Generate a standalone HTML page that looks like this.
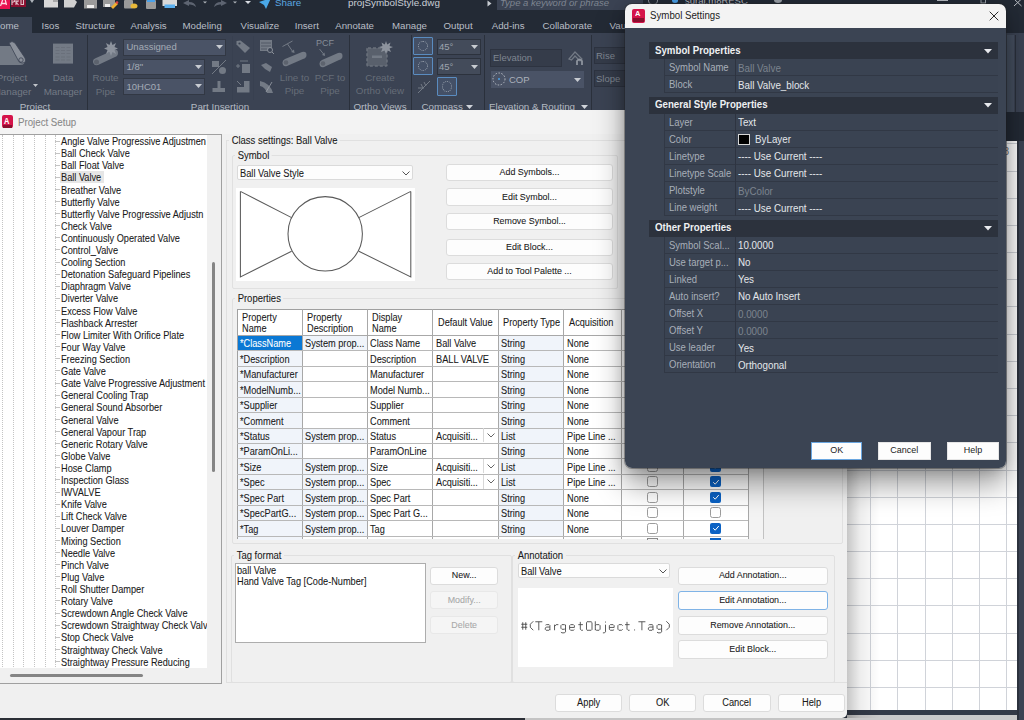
<!DOCTYPE html>
<html><head><meta charset="utf-8"><style>
html,body{margin:0;padding:0;width:1024px;height:720px;overflow:hidden;font-family:"Liberation Sans", sans-serif;}
div{box-sizing:content-box}
</style></head><body><div style="position:relative;width:1024px;height:720px;overflow:hidden">
<div style="position:absolute;left:0px;top:0px;width:1024px;height:720px;background:#232a35"></div><div style="position:absolute;left:0px;top:17px;width:32px;height:16px;background:#3b4353"></div><div style="position:absolute;left:0px;top:33px;width:1024px;height:79px;background:#3b4353"></div><div style="position:absolute;left:0px;top:20.18px;height:11.64px;line-height:11.64px;font-size:9.70px;color:#b9bec6;font-weight:400;white-space:nowrap;">ome</div><div style="position:absolute;left:41.5px;top:20.18px;height:11.64px;line-height:11.64px;font-size:9.70px;color:#b9bec6;font-weight:400;white-space:nowrap;">Isos</div><div style="position:absolute;left:75.6px;top:20.18px;height:11.64px;line-height:11.64px;font-size:9.70px;color:#b9bec6;font-weight:400;white-space:nowrap;">Structure</div><div style="position:absolute;left:130.6px;top:20.18px;height:11.64px;line-height:11.64px;font-size:9.70px;color:#b9bec6;font-weight:400;white-space:nowrap;">Analysis</div><div style="position:absolute;left:182.5px;top:20.18px;height:11.64px;line-height:11.64px;font-size:9.70px;color:#b9bec6;font-weight:400;white-space:nowrap;">Modeling</div><div style="position:absolute;left:240.6px;top:20.18px;height:11.64px;line-height:11.64px;font-size:9.70px;color:#b9bec6;font-weight:400;white-space:nowrap;">Visualize</div><div style="position:absolute;left:294.7px;top:20.18px;height:11.64px;line-height:11.64px;font-size:9.70px;color:#b9bec6;font-weight:400;white-space:nowrap;">Insert</div><div style="position:absolute;left:335.2px;top:20.18px;height:11.64px;line-height:11.64px;font-size:9.70px;color:#b9bec6;font-weight:400;white-space:nowrap;">Annotate</div><div style="position:absolute;left:392px;top:20.18px;height:11.64px;line-height:11.64px;font-size:9.70px;color:#b9bec6;font-weight:400;white-space:nowrap;">Manage</div><div style="position:absolute;left:443.5px;top:20.18px;height:11.64px;line-height:11.64px;font-size:9.70px;color:#b9bec6;font-weight:400;white-space:nowrap;">Output</div><div style="position:absolute;left:491.7px;top:20.18px;height:11.64px;line-height:11.64px;font-size:9.70px;color:#b9bec6;font-weight:400;white-space:nowrap;">Add-ins</div><div style="position:absolute;left:542.5px;top:20.18px;height:11.64px;line-height:11.64px;font-size:9.70px;color:#b9bec6;font-weight:400;white-space:nowrap;">Collaborate</div><div style="position:absolute;left:609.6px;top:20.18px;height:11.64px;line-height:11.64px;font-size:9.70px;color:#b9bec6;font-weight:400;white-space:nowrap;">Vau</div><div style="position:absolute;left:348px;top:-2.91px;height:11.82px;line-height:11.82px;font-size:9.85px;color:#c9ced6;font-weight:400;white-space:nowrap;">projSymbolStyle.dwg</div><div style="position:absolute;left:497px;top:0px;width:146px;height:9.5px;background:#3b4353"></div><div style="position:absolute;left:648px;top:-4px;width:8px;height:7px;border:1px solid #8a9099;border-radius:50%"></div><div style="position:absolute;left:672px;top:-2px;width:6px;height:5px;background:#4aa0e8;border-radius:50%"></div><div style="position:absolute;left:685px;top:-5.20px;height:11.40px;line-height:11.40px;font-size:9.50px;color:#b8bcc2;font-weight:400;white-space:nowrap;">suraj.m8RESC</div><div style="position:absolute;left:774px;top:-3px;width:8px;height:6px;background:#9aa0a8;border-radius:0 0 50% 50%"></div><div style="position:absolute;left:500px;top:-2.70px;height:11.40px;line-height:11.40px;font-size:9.50px;color:#7e8591;font-weight:400;white-space:nowrap;font-style:italic">Type a keyword or phrase</div><div style="position:absolute;left:275px;top:-2.88px;height:11.76px;line-height:11.76px;font-size:9.80px;color:#5aa7e0;font-weight:400;white-space:nowrap;">Share</div><svg style="position:absolute;left:487px;top:0px" width="6" height="8"><path d="M0.5 0.5 L4.5 3.5 L0.5 6.5 Z" fill="#c8ccd2"/></svg><div style="position:absolute;left:0px;top:0px;width:9.5px;height:8.5px;background:#e8104f"></div><div style="position:absolute;left:10.5px;top:0px;width:15.5px;height:6.5px;background:#8a0e2e"></div><svg style="position:absolute;left:0;top:0" width="30" height="10"><path d="M0.5 6 L3 -1 L5 -1 L6.5 5 M1.5 3.5 L5.5 3.5" stroke="#ffd8e2" stroke-width="1.3" fill="none"/><path d="M12 5 L12 -1 L14 -1 L14.5 1.5 L12 2.5 M16 5 L16 -1 L18 -1 L18 1.5 L16 2 L18.5 5 M21 -0.5 L23.5 -0.5 L23.5 4.5 L21 4.5 Z" stroke="#e0c0c8" stroke-width="1.1" fill="none"/></svg><div style="position:absolute;left:86.5px;top:35px;width:1.2999999999999972px;height:75px;background:#2a303b"></div><div style="position:absolute;left:348.7px;top:35px;width:1.3000000000000114px;height:75px;background:#2a303b"></div><div style="position:absolute;left:411px;top:35px;width:1.3000000000000114px;height:75px;background:#2a303b"></div><div style="position:absolute;left:483.7px;top:35px;width:1.3000000000000114px;height:75px;background:#2a303b"></div><div style="position:absolute;left:590.5px;top:35px;width:1.2999999999999545px;height:75px;background:#2a303b"></div><div style="position:absolute;left:-13px;width:50px;text-align:center;top:71.62px;height:11.76px;line-height:11.76px;font-size:9.80px;color:#737a85;font-weight:400;white-space:nowrap;">Project</div><div style="position:absolute;left:-13px;width:50px;text-align:center;top:85.62px;height:11.76px;line-height:11.76px;font-size:9.80px;color:#737a85;font-weight:400;white-space:nowrap;">Manager</div><svg style="position:absolute;left:33px;top:84px" width="6" height="4"><path d="M0 0 L5 0 L2.5 3 Z" fill="#c0c4ca"/></svg><div style="position:absolute;left:43px;width:40px;text-align:center;top:71.62px;height:11.76px;line-height:11.76px;font-size:9.80px;color:#737a85;font-weight:400;white-space:nowrap;">Data</div><div style="position:absolute;left:43px;width:40px;text-align:center;top:85.62px;height:11.76px;line-height:11.76px;font-size:9.80px;color:#737a85;font-weight:400;white-space:nowrap;">Manager</div><div style="position:absolute;left:15px;width:40px;text-align:center;top:100.62px;height:11.76px;line-height:11.76px;font-size:9.80px;color:#b4bac2;font-weight:400;white-space:nowrap;">Project</div><div style="position:absolute;left:88px;width:35px;text-align:center;top:71.62px;height:11.76px;line-height:11.76px;font-size:9.80px;color:#6a717c;font-weight:400;white-space:nowrap;">Route</div><div style="position:absolute;left:88px;width:35px;text-align:center;top:85.62px;height:11.76px;line-height:11.76px;font-size:9.80px;color:#6a717c;font-weight:400;white-space:nowrap;">Pipe</div><div style="position:absolute;left:180px;width:80px;text-align:center;top:100.62px;height:11.76px;line-height:11.76px;font-size:9.80px;color:#b4bac2;font-weight:400;white-space:nowrap;">Part Insertion</div><div style="position:absolute;left:274px;width:41px;text-align:center;top:71.82px;height:11.76px;line-height:11.76px;font-size:9.80px;color:#666d78;font-weight:400;white-space:nowrap;">Line to</div><div style="position:absolute;left:274px;width:41px;text-align:center;top:85.12px;height:11.76px;line-height:11.76px;font-size:9.80px;color:#666d78;font-weight:400;white-space:nowrap;">Pipe</div><div style="position:absolute;left:310px;width:40px;text-align:center;top:71.82px;height:11.76px;line-height:11.76px;font-size:9.80px;color:#666d78;font-weight:400;white-space:nowrap;">PCF to</div><div style="position:absolute;left:310px;width:40px;text-align:center;top:85.12px;height:11.76px;line-height:11.76px;font-size:9.80px;color:#666d78;font-weight:400;white-space:nowrap;">Pipe</div><div style="position:absolute;left:350px;width:60px;text-align:center;top:71.72px;height:11.76px;line-height:11.76px;font-size:9.80px;color:#666d78;font-weight:400;white-space:nowrap;">Create</div><div style="position:absolute;left:350px;width:60px;text-align:center;top:85.42px;height:11.76px;line-height:11.76px;font-size:9.80px;color:#666d78;font-weight:400;white-space:nowrap;">Ortho View</div><div style="position:absolute;left:345px;width:70px;text-align:center;top:101.12px;height:11.76px;line-height:11.76px;font-size:9.80px;color:#b4bac2;font-weight:400;white-space:nowrap;">Ortho Views</div><div style="position:absolute;left:421.5px;top:101.12px;height:11.76px;line-height:11.76px;font-size:9.80px;color:#b4bac2;font-weight:400;white-space:nowrap;">Compass</div><svg style="position:absolute;left:465.5px;top:104.5px" width="8" height="5"><path d="M0 0 L7 0 L3.5 4 Z" fill="#d0d4da"/></svg><div style="position:absolute;left:489px;top:101.12px;height:11.76px;line-height:11.76px;font-size:9.80px;color:#b4bac2;font-weight:400;white-space:nowrap;">Elevation &amp; Routing</div><svg style="position:absolute;left:580.5px;top:104.5px" width="8" height="5"><path d="M0 0 L7 0 L3.5 4 Z" fill="#d0d4da"/></svg><div style="position:absolute;left:122.5px;top:38.5px;width:103.5px;height:17.0px;background:#4a5366;border:1px solid #323844;box-sizing:border-box"></div><div style="position:absolute;left:126.5px;top:41.30px;height:11.40px;line-height:11.40px;font-size:9.50px;color:#a5acb6;font-weight:400;white-space:nowrap;">Unassigned</div><svg style="position:absolute;left:216px;top:45.0px" width="8" height="5"><path d="M0 0 L7 0 L3.5 4 Z" fill="#c8ccd2"/></svg><div style="position:absolute;left:122.5px;top:58.5px;width:82.5px;height:16.5px;background:#4a5366;border:1px solid #323844;box-sizing:border-box"></div><div style="position:absolute;left:126.5px;top:61.05px;height:11.40px;line-height:11.40px;font-size:9.50px;color:#a5acb6;font-weight:400;white-space:nowrap;">1/8"</div><svg style="position:absolute;left:195px;top:64.75px" width="8" height="5"><path d="M0 0 L7 0 L3.5 4 Z" fill="#c8ccd2"/></svg><div style="position:absolute;left:122.5px;top:78px;width:82.5px;height:16.5px;background:#4a5366;border:1px solid #323844;box-sizing:border-box"></div><div style="position:absolute;left:126.5px;top:80.55px;height:11.40px;line-height:11.40px;font-size:9.50px;color:#a5acb6;font-weight:400;white-space:nowrap;">10HC01</div><svg style="position:absolute;left:195px;top:84.25px" width="8" height="5"><path d="M0 0 L7 0 L3.5 4 Z" fill="#c8ccd2"/></svg><div style="position:absolute;left:437px;top:39px;width:44px;height:16px;background:#434b5a;border:1px solid #2c323d;box-sizing:border-box"></div><div style="position:absolute;left:439px;top:41.30px;height:11.40px;line-height:11.40px;font-size:9.50px;color:#9ea5af;font-weight:400;white-space:nowrap;">45&#176;</div><svg style="position:absolute;left:471px;top:45.0px" width="8" height="5"><path d="M0 0 L7 0 L3.5 4 Z" fill="#c8ccd2"/></svg><div style="position:absolute;left:437px;top:58px;width:44px;height:17px;background:#434b5a;border:1px solid #2c323d;box-sizing:border-box"></div><div style="position:absolute;left:439px;top:60.80px;height:11.40px;line-height:11.40px;font-size:9.50px;color:#9ea5af;font-weight:400;white-space:nowrap;">45&#176;</div><svg style="position:absolute;left:471px;top:64.5px" width="8" height="5"><path d="M0 0 L7 0 L3.5 4 Z" fill="#c8ccd2"/></svg><div style="position:absolute;left:413px;top:37px;width:20px;height:18px;background:#445066;border:1px solid #5a8cc0;border-radius:1px;box-sizing:border-box"></div><div style="position:absolute;left:418px;top:41px;width:10px;height:10px;border:1px dotted #9aa3ae;border-radius:50%;box-sizing:border-box"></div><div style="position:absolute;left:413px;top:57px;width:20px;height:18px;background:#445066;border:1px solid #5a8cc0;border-radius:1px;box-sizing:border-box"></div><div style="position:absolute;left:418px;top:61px;width:10px;height:10px;border:1px dotted #9aa3ae;border-radius:50%;box-sizing:border-box"></div><div style="position:absolute;left:437px;top:77px;width:20px;height:19px;background:#445066;border:1px solid #5a8cc0;border-radius:1px;box-sizing:border-box"></div><div style="position:absolute;left:442px;top:81px;width:10px;height:11px;border:1px dotted #9aa3ae;border-radius:50%;box-sizing:border-box"></div><div style="position:absolute;left:490px;top:49px;width:72px;height:17.5px;background:#353c4a;border:1px solid #2d3340;box-sizing:border-box"></div><div style="position:absolute;left:493px;top:51.80px;height:11.40px;line-height:11.40px;font-size:9.50px;color:#7f8691;font-weight:400;white-space:nowrap;">Elevation</div><div style="position:absolute;left:491px;top:71px;width:93px;height:17px;background:#4a5366"></div><div style="position:absolute;left:509px;top:73.80px;height:11.40px;line-height:11.40px;font-size:9.50px;color:#aab1bb;font-weight:400;white-space:nowrap;">COP</div><svg style="position:absolute;left:574px;top:77.5px" width="8" height="5"><path d="M0 0 L7 0 L3.5 4 Z" fill="#c8ccd2"/></svg><div style="position:absolute;left:594px;top:47px;width:46px;height:17px;background:#353c4a;border:1px solid #2d3340;box-sizing:border-box"></div><div style="position:absolute;left:596px;top:49.80px;height:11.40px;line-height:11.40px;font-size:9.50px;color:#7f8691;font-weight:400;white-space:nowrap;">Rise</div><div style="position:absolute;left:594px;top:70px;width:46px;height:17px;background:#353c4a;border:1px solid #2d3340;box-sizing:border-box"></div><div style="position:absolute;left:596px;top:72.80px;height:11.40px;line-height:11.40px;font-size:9.50px;color:#7f8691;font-weight:400;white-space:nowrap;">Slope</div><svg style="position:absolute;left:0;top:0" width="1024" height="112"><path d="M30 0 L34 0 L32 3 Z" fill="#aeb3ba"/><path d="M44 0 L58 0 L58 7.5 L44 7.5 Z" fill="#d8d8d8"/><path d="M53 0 L58 0 L58 2 L53 2Z" fill="#a8a8a8"/><path d="M64 0 L75 0 L77 2 L74 7.5 L64 7.5 Z" fill="#d0d0d0"/><path d="M84 0 L97 0 L97 8.5 L84 8.5 Z" fill="#9a9a9a"/><rect x="87" y="5" width="7" height="3" fill="#eee"/><path d="M103 0 L115 0 L115 7 L103 7 Z" fill="#9a9a9a"/><rect x="105" y="4" width="5" height="3" fill="#eee"/><path d="M111 7 L116 2 L118 4 L113 9 Z" fill="#f0b030"/><circle cx="117" cy="2.5" r="1.3" fill="#e04040"/><rect x="124" y="0" width="9" height="8.5" rx="1" fill="#9a9a9a"/><ellipse cx="134" cy="6" rx="3.5" ry="2.5" fill="#e8b83a"/><rect x="146" y="0" width="10" height="9" rx="1" fill="#9a9a9a"/><rect x="147" y="0" width="8" height="2" fill="#4aa0e8"/><rect x="162.5" y="0" width="14.5" height="6" fill="#d9d9d9"/><rect x="164.5" y="4.5" width="10.5" height="3.5" fill="#5bb0ef"/><path d="M183 3 L189 0 L189 2 Q195 2 196 7 Q193 4 189 4.5 L189 6 Z" fill="#5d6471"/><path d="M203 1.5 L207 1.5 L205 3.5 Z" fill="#aeb3ba"/><path d="M227 3 L221 0 L221 2 Q215 2 214 7 Q217 4 221 4.5 L221 6 Z" fill="#5d6471"/><path d="M233 1.5 L237 1.5 L235 3.5 Z" fill="#aeb3ba"/><path d="M245 1 L251 1 L248 4 Z" fill="#d8dce2"/><path d="M259 2 L271 -2 L266 9 L264 5 Z" fill="#4aa8e8"/><path d="M1014 -1 L1021.5 6 M1021.5 -1 L1014 6" stroke="#b8bcc2" stroke-width="1"/><rect x="981" y="-3" width="4.5" height="6" fill="none" stroke="#9aa0a8" stroke-width="1"/><path d="M937 0.5 L948 0.5" stroke="#b8bcc2" stroke-width="1"/><path d="M0 46 L14 46 L24 60 Q26 65 20 65 L0 65 Z" fill="#737a85"/><path d="M9 43 Q12 40 15 43 L25 58 Q27 63 22 63 Q19 63 18 60 Z" fill="#8a909a" stroke="#3b4353" stroke-width="0.8"/><circle cx="21" cy="60" r="2.2" fill="none" stroke="#3b4353" stroke-width="0.8"/><rect x="53" y="43.6" width="20" height="20" fill="#737a85"/><rect x="55.5" y="47" width="4" height="1" fill="#6a707b"/><rect x="61" y="47" width="4" height="1" fill="#6a707b"/><rect x="66.5" y="47" width="4" height="1" fill="#6a707b"/><rect x="55.5" y="50" width="4" height="1" fill="#6a707b"/><rect x="61" y="50" width="4" height="1" fill="#6a707b"/><rect x="66.5" y="50" width="4" height="1" fill="#6a707b"/><rect x="55.5" y="53" width="4" height="1" fill="#6a707b"/><rect x="61" y="53" width="4" height="1" fill="#6a707b"/><rect x="66.5" y="53" width="4" height="1" fill="#6a707b"/><rect x="55.5" y="56.5" width="4" height="1" fill="#6a707b"/><rect x="61" y="56.5" width="4" height="1" fill="#6a707b"/><rect x="66.5" y="56.5" width="4" height="1" fill="#6a707b"/><rect x="55.5" y="59.5" width="4" height="1" fill="#6a707b"/><rect x="61" y="59.5" width="4" height="1" fill="#6a707b"/><rect x="66.5" y="59.5" width="4" height="1" fill="#6a707b"/><path d="M96 58 L114 50 Q118 49 118 53 Q118 56 115 57 L98 65 Q93 66 93 61 Q93 59 96 58 Z" fill="#737a85"/><circle cx="96.5" cy="62" r="2.5" fill="#5d636e"/><path d="M111 41 L112.5 45 L116 43 L114.5 47 L118 48.5 L114.5 50 L116 54 L112.5 52 L111 56 L109.5 52 L106 54 L107.5 50 L104 48.5 L107.5 47 L106 43 L109.5 45 Z" fill="#8d939d"/><rect x="212" y="61" width="7" height="6" fill="#737a85"/><circle cx="222.5" cy="70.5" r="3.5" fill="#737a85"/><path d="M212 74 L226 60" stroke="#737a85" stroke-width="1"/><rect x="212.5" y="88" width="12.5" height="4" fill="#737a85"/><rect x="217.5" y="81" width="3" height="7" fill="#737a85"/><path d="M236.5 44.5 L236.5 41 L240.5 40.5 L250 48 L245 53 Z" fill="#737a85"/><circle cx="239.5" cy="43.5" r="1.1" fill="#3b4353"/><rect x="242" y="64" width="8" height="9" fill="#737a85"/><path d="M236 66 L240 66 M238 64 L238 68 M240 61 L248 61" stroke="#737a85" stroke-width="1"/><path d="M244 81 L249.5 81 L249.5 92.5 L237 92.5 L237 87 L244 87 Z" fill="#737a85"/><path d="M237 81 L241 85" stroke="#737a85" stroke-width="1"/><rect x="260" y="40" width="12" height="11" fill="#737a85"/><path d="M261 43 L271 43 M261 46 L271 46 M261 49 L267 49" stroke="#4a515d" stroke-width="0.8"/><circle cx="270" cy="50" r="2.5" fill="#3b4353" stroke="#8a9099" stroke-width="1"/><path d="M272 52 L274 54" stroke="#8a9099" stroke-width="1"/><path d="M261 65 L266 63 L272 67 L270 72 L265 69 Z" fill="#737a85"/><path d="M260 81 Q270 83 273 93 L267 93 Q265 87 260 86 Z" fill="#737a85"/><path d="M266 92 L272 82" stroke="#9aa0a8" stroke-width="0.8"/><path d="M282.5 46.5 L292.5 41" stroke="#737a85" stroke-width="1"/><path d="M287.5 44 L293 52" stroke="#737a85" stroke-width="1"/><path d="M291 52 L294.5 53 L294 49.5 Z" fill="#737a85"/><path d="M285 59 L302 52 Q306.5 51 306.5 55 Q306.5 58 303 59 L287 66 Q282.5 67 282.5 62.5 Q282.5 60 285 59 Z" fill="#737a85"/><circle cx="286" cy="62.5" r="2.3" fill="#5d636e"/><path d="M319.5 49 L324 54.5" stroke="#737a85" stroke-width="1"/><path d="M322 55 L325 56 L324.5 52.5 Z" fill="#737a85"/><path d="M322 60 L338 53 Q342.5 52 342.5 56 Q342.5 59 339 60 L324 67 Q319.5 68 319.5 63.5 Q319.5 61 322 60 Z" fill="#737a85"/><circle cx="323" cy="63.5" r="2.3" fill="#5d636e"/><rect x="367" y="48" width="20" height="18" rx="1" fill="#59606c" stroke="#6b717c" stroke-width="1.5" stroke-dasharray="3 2"/><rect x="372" y="55.5" width="10" height="2.5" fill="#737a85"/><path d="M386 41 L387.2 44.5 L390.5 42.5 L389.5 46 L393 47 L389.5 48.5 L391 52 L387.5 50.5 L386 54 L384.5 50.5 L381 52 L382.5 48.5 L379 47 L382.5 46 L381.5 42.5 L384.8 44.5 Z" fill="#8d939d"/><path d="M418 93 L430 81 M421 84 L423 88 M424 82 L426 86 M418 88 L424 88" stroke="#737a85" stroke-width="1"/><path d="M569 59 L575 52 L582 59 L580 61 L575 56 L571.5 60 Z" fill="none" stroke="#737a85" stroke-width="1.2"/><path d="M577 65 L577 61 Q579.5 58 582 61 L582 65" fill="none" stroke="#8d939d" stroke-width="1.8"/><circle cx="499" cy="79" r="6" fill="none" stroke="#b8bdc5" stroke-width="1" stroke-dasharray="1.5 1.5"/><circle cx="499" cy="79" r="1" fill="#4aa0e8"/></svg><div style="position:absolute;left:232px;top:36px;width:1px;height:64px;background:#384050"></div><div style="position:absolute;left:253px;top:36px;width:1px;height:64px;background:#384050"></div><div style="position:absolute;left:316px;top:38.10px;height:10.80px;line-height:10.80px;font-size:9.00px;color:#868d97;font-weight:400;white-space:nowrap;">PCF</div><div style="position:absolute;left:1007px;top:35px;width:7px;height:77px;background:#465061"></div><div style="position:absolute;left:1015px;top:35px;width:1px;height:77px;background:#2a303b"></div><div style="position:absolute;left:1006px;top:112px;width:18px;height:28.5px;background:#232a35"></div><div style="position:absolute;left:847px;top:140.5px;width:170px;height:569.5px;background:#ffffff;overflow:hidden"><div style="position:absolute;left:23.1px;top:0;width:1px;height:100%;background:#d0d3d9"></div><div style="position:absolute;left:50.4px;top:0;width:1px;height:100%;background:#d0d3d9"></div><div style="position:absolute;left:77.9px;top:0;width:1px;height:100%;background:#d0d3d9"></div><div style="position:absolute;left:105.2px;top:0;width:1px;height:100%;background:#d0d3d9"></div><div style="position:absolute;left:132.0px;top:0;width:1px;height:100%;background:#d0d3d9"></div><div style="position:absolute;left:158.7px;top:0;width:1px;height:100%;background:#d0d3d9"></div><div style="position:absolute;top:356.2px;left:0;height:1px;width:100%;background:#d0d3d9"></div><div style="position:absolute;top:329.0px;left:0;height:1px;width:100%;background:#d0d3d9"></div><div style="position:absolute;top:301.8px;left:0;height:1px;width:100%;background:#d0d3d9"></div><div style="position:absolute;top:274.7px;left:0;height:1px;width:100%;background:#d0d3d9"></div><div style="position:absolute;top:247.5px;left:0;height:1px;width:100%;background:#d0d3d9"></div><div style="position:absolute;top:220.3px;left:0;height:1px;width:100%;background:#d0d3d9"></div><div style="position:absolute;top:193.1px;left:0;height:1px;width:100%;background:#d0d3d9"></div><div style="position:absolute;top:165.9px;left:0;height:1px;width:100%;background:#d0d3d9"></div><div style="position:absolute;top:138.8px;left:0;height:1px;width:100%;background:#d0d3d9"></div><div style="position:absolute;top:111.6px;left:0;height:1px;width:100%;background:#d0d3d9"></div><div style="position:absolute;top:84.4px;left:0;height:1px;width:100%;background:#d0d3d9"></div><div style="position:absolute;top:57.2px;left:0;height:1px;width:100%;background:#d0d3d9"></div><div style="position:absolute;top:30.0px;left:0;height:1px;width:100%;background:#d0d3d9"></div><div style="position:absolute;top:2.9px;left:0;height:1px;width:100%;background:#d0d3d9"></div><div style="position:absolute;top:383.4px;left:0;height:1px;width:100%;background:#d0d3d9"></div><div style="position:absolute;top:410.6px;left:0;height:1px;width:100%;background:#d0d3d9"></div><div style="position:absolute;top:437.7px;left:0;height:1px;width:100%;background:#d0d3d9"></div><div style="position:absolute;top:464.9px;left:0;height:1px;width:100%;background:#d0d3d9"></div><div style="position:absolute;top:492.1px;left:0;height:1px;width:100%;background:#d0d3d9"></div><div style="position:absolute;top:519.3px;left:0;height:1px;width:100%;background:#d0d3d9"></div><div style="position:absolute;top:546.5px;left:0;height:1px;width:100%;background:#d0d3d9"></div></div><div style="position:absolute;left:1017px;top:140.5px;width:7px;height:579.5px;background:#3b4353"></div><div style="position:absolute;left:1016.8px;top:140.5px;width:2.2000000000000455px;height:579.5px;background:#2c323d"></div><div style="position:absolute;left:1003.5px;top:145.50px;height:12.00px;line-height:12.00px;font-size:10.00px;color:#6a6a6a;font-weight:400;white-space:nowrap;">8</div><div style="position:absolute;left:847px;top:710px;width:170px;height:4.5px;background:#333a47"></div><div style="position:absolute;left:847px;top:714.5px;width:170px;height:5.5px;background:#c8c8c8"></div><div style="position:absolute;left:847px;top:137px;width:33px;height:581px;background:linear-gradient(to right,rgba(0,0,0,0.22),rgba(0,0,0,0.07) 40%,rgba(0,0,0,0))"></div><div style="position:absolute;left:0px;top:110px;width:847px;height:608.4px;background:#f0f0f0;border-radius:0 0 5px 0"></div><div style="position:absolute;left:0px;top:110px;width:847px;height:24px;background:#f3f3f3"></div><div style="position:absolute;left:2px;top:115px;width:11px;height:13px;background:#d5144a;border-radius:2px"></div><div style="position:absolute;left:3px;top:124.5px;width:9px;height:3.0px;background:#8a0f2e"></div><div style="position:absolute;left:4.2px;top:115.76px;height:10.08px;line-height:10.08px;font-size:8.40px;color:#fff;font-weight:700;white-space:nowrap;transform:scaleX(0.8929);transform-origin:0 50%;-webkit-text-stroke:0.08px currentColor;">A</div><div style="position:absolute;left:18px;top:115.58px;height:13.04px;line-height:13.04px;font-size:10.86px;color:#888888;font-weight:400;white-space:nowrap;transform:scaleX(0.8929);transform-origin:0 50%;-webkit-text-stroke:0.08px currentColor;">Project Setup</div><div style="position:absolute;left:0px;top:718.4px;width:525px;height:1.6000000000000227px;background:#2b2f36"></div><div style="position:absolute;left:525px;top:718.4px;width:322px;height:1.6000000000000227px;background:#c4c4c4"></div><div style="position:absolute;left:0px;top:134px;width:221.5px;height:549.5px;border:1px solid #a0a0a0;border-left:none;box-sizing:border-box;background:#f0f0f0"></div><div style="position:absolute;left:0px;top:135px;width:207px;height:533px;background:#fff;overflow:hidden;position:absolute"><div style="position:absolute;left:2px;top:0px;width:1px;height:534px;border-left:1px dotted #c4c4c4;box-sizing:border-box"></div><div style="position:absolute;left:12.5px;top:0px;width:1.0px;height:534px;border-left:1px dotted #c4c4c4;box-sizing:border-box"></div><div style="position:absolute;left:23px;top:0px;width:1px;height:534px;border-left:1px dotted #c4c4c4;box-sizing:border-box"></div><div style="position:absolute;left:34px;top:0px;width:1px;height:534px;border-left:1px dotted #c4c4c4;box-sizing:border-box"></div><div style="position:absolute;left:44.5px;top:0px;width:1.0px;height:534px;border-left:1px dotted #c4c4c4;box-sizing:border-box"></div><div style="position:absolute;left:54.5px;top:0px;width:1.0px;height:534px;border-left:1px dotted #c4c4c4;box-sizing:border-box"></div><div style="position:absolute;left:55px;top:5.5px;width:5px;height:1.0px;background:#c4c4c4"></div><div style="position:absolute;left:61px;top:1.12px;height:12.36px;line-height:12.36px;font-size:10.30px;color:#1a1a1a;font-weight:400;white-space:nowrap;transform:scaleX(0.8929);transform-origin:0 50%;-webkit-text-stroke:0.08px currentColor;">Angle Valve Progressive Adjustmen</div><div style="position:absolute;left:55px;top:17.60499999999999px;width:5px;height:1.0px;background:#c4c4c4"></div><div style="position:absolute;left:61px;top:13.22px;height:12.36px;line-height:12.36px;font-size:10.30px;color:#1a1a1a;font-weight:400;white-space:nowrap;transform:scaleX(0.8929);transform-origin:0 50%;-webkit-text-stroke:0.08px currentColor;">Ball Check Valve</div><div style="position:absolute;left:55px;top:29.710000000000008px;width:5px;height:1.0px;background:#c4c4c4"></div><div style="position:absolute;left:61px;top:25.33px;height:12.36px;line-height:12.36px;font-size:10.30px;color:#1a1a1a;font-weight:400;white-space:nowrap;transform:scaleX(0.8929);transform-origin:0 50%;-webkit-text-stroke:0.08px currentColor;">Ball Float Valve</div><div style="position:absolute;left:55px;top:41.815px;width:5px;height:1.0px;background:#c4c4c4"></div><div style="position:absolute;left:60px;top:36.315px;width:44px;height:12.0px;background:#e6e6e6"></div><div style="position:absolute;left:61px;top:37.43px;height:12.36px;line-height:12.36px;font-size:10.30px;color:#1a1a1a;font-weight:400;white-space:nowrap;transform:scaleX(0.8929);transform-origin:0 50%;-webkit-text-stroke:0.08px currentColor;">Ball Valve</div><div style="position:absolute;left:55px;top:53.920000000000016px;width:5px;height:1.0px;background:#c4c4c4"></div><div style="position:absolute;left:61px;top:49.54px;height:12.36px;line-height:12.36px;font-size:10.30px;color:#1a1a1a;font-weight:400;white-space:nowrap;transform:scaleX(0.8929);transform-origin:0 50%;-webkit-text-stroke:0.08px currentColor;">Breather Valve</div><div style="position:absolute;left:55px;top:66.025px;width:5px;height:1.0px;background:#c4c4c4"></div><div style="position:absolute;left:61px;top:61.64px;height:12.36px;line-height:12.36px;font-size:10.30px;color:#1a1a1a;font-weight:400;white-space:nowrap;transform:scaleX(0.8929);transform-origin:0 50%;-webkit-text-stroke:0.08px currentColor;">Butterfly Valve</div><div style="position:absolute;left:55px;top:78.13px;width:5px;height:1.0px;background:#c4c4c4"></div><div style="position:absolute;left:61px;top:73.75px;height:12.36px;line-height:12.36px;font-size:10.30px;color:#1a1a1a;font-weight:400;white-space:nowrap;transform:scaleX(0.8929);transform-origin:0 50%;-webkit-text-stroke:0.08px currentColor;">Butterfly Valve Progressive Adjustn</div><div style="position:absolute;left:55px;top:90.23500000000001px;width:5px;height:1.0px;background:#c4c4c4"></div><div style="position:absolute;left:61px;top:85.85px;height:12.36px;line-height:12.36px;font-size:10.30px;color:#1a1a1a;font-weight:400;white-space:nowrap;transform:scaleX(0.8929);transform-origin:0 50%;-webkit-text-stroke:0.08px currentColor;">Check Valve</div><div style="position:absolute;left:55px;top:102.34px;width:5px;height:1.0px;background:#c4c4c4"></div><div style="position:absolute;left:61px;top:97.96px;height:12.36px;line-height:12.36px;font-size:10.30px;color:#1a1a1a;font-weight:400;white-space:nowrap;transform:scaleX(0.8929);transform-origin:0 50%;-webkit-text-stroke:0.08px currentColor;">Continuously Operated Valve</div><div style="position:absolute;left:55px;top:114.445px;width:5px;height:1.0px;background:#c4c4c4"></div><div style="position:absolute;left:61px;top:110.06px;height:12.36px;line-height:12.36px;font-size:10.30px;color:#1a1a1a;font-weight:400;white-space:nowrap;transform:scaleX(0.8929);transform-origin:0 50%;-webkit-text-stroke:0.08px currentColor;">Control_Valve</div><div style="position:absolute;left:55px;top:126.55000000000001px;width:5px;height:1.0px;background:#c4c4c4"></div><div style="position:absolute;left:61px;top:122.17px;height:12.36px;line-height:12.36px;font-size:10.30px;color:#1a1a1a;font-weight:400;white-space:nowrap;transform:scaleX(0.8929);transform-origin:0 50%;-webkit-text-stroke:0.08px currentColor;">Cooling Section</div><div style="position:absolute;left:55px;top:138.65499999999997px;width:5px;height:1.0px;background:#c4c4c4"></div><div style="position:absolute;left:61px;top:134.27px;height:12.36px;line-height:12.36px;font-size:10.30px;color:#1a1a1a;font-weight:400;white-space:nowrap;transform:scaleX(0.8929);transform-origin:0 50%;-webkit-text-stroke:0.08px currentColor;">Detonation Safeguard Pipelines</div><div style="position:absolute;left:55px;top:150.76px;width:5px;height:1.0px;background:#c4c4c4"></div><div style="position:absolute;left:61px;top:146.38px;height:12.36px;line-height:12.36px;font-size:10.30px;color:#1a1a1a;font-weight:400;white-space:nowrap;transform:scaleX(0.8929);transform-origin:0 50%;-webkit-text-stroke:0.08px currentColor;">Diaphragm Valve</div><div style="position:absolute;left:55px;top:162.865px;width:5px;height:1.0px;background:#c4c4c4"></div><div style="position:absolute;left:61px;top:158.48px;height:12.36px;line-height:12.36px;font-size:10.30px;color:#1a1a1a;font-weight:400;white-space:nowrap;transform:scaleX(0.8929);transform-origin:0 50%;-webkit-text-stroke:0.08px currentColor;">Diverter Valve</div><div style="position:absolute;left:55px;top:174.97000000000003px;width:5px;height:1.0px;background:#c4c4c4"></div><div style="position:absolute;left:61px;top:170.59px;height:12.36px;line-height:12.36px;font-size:10.30px;color:#1a1a1a;font-weight:400;white-space:nowrap;transform:scaleX(0.8929);transform-origin:0 50%;-webkit-text-stroke:0.08px currentColor;">Excess Flow Valve</div><div style="position:absolute;left:55px;top:187.07500000000005px;width:5px;height:1.0px;background:#c4c4c4"></div><div style="position:absolute;left:61px;top:182.69px;height:12.36px;line-height:12.36px;font-size:10.30px;color:#1a1a1a;font-weight:400;white-space:nowrap;transform:scaleX(0.8929);transform-origin:0 50%;-webkit-text-stroke:0.08px currentColor;">Flashback Arrester</div><div style="position:absolute;left:55px;top:199.18px;width:5px;height:1.0px;background:#c4c4c4"></div><div style="position:absolute;left:61px;top:194.80px;height:12.36px;line-height:12.36px;font-size:10.30px;color:#1a1a1a;font-weight:400;white-space:nowrap;transform:scaleX(0.8929);transform-origin:0 50%;-webkit-text-stroke:0.08px currentColor;">Flow Limiter With Orifice Plate</div><div style="position:absolute;left:55px;top:211.28499999999997px;width:5px;height:1.0px;background:#c4c4c4"></div><div style="position:absolute;left:61px;top:206.90px;height:12.36px;line-height:12.36px;font-size:10.30px;color:#1a1a1a;font-weight:400;white-space:nowrap;transform:scaleX(0.8929);transform-origin:0 50%;-webkit-text-stroke:0.08px currentColor;">Four Way Valve</div><div style="position:absolute;left:55px;top:223.39px;width:5px;height:1.0px;background:#c4c4c4"></div><div style="position:absolute;left:61px;top:219.01px;height:12.36px;line-height:12.36px;font-size:10.30px;color:#1a1a1a;font-weight:400;white-space:nowrap;transform:scaleX(0.8929);transform-origin:0 50%;-webkit-text-stroke:0.08px currentColor;">Freezing Section</div><div style="position:absolute;left:55px;top:235.495px;width:5px;height:1.0px;background:#c4c4c4"></div><div style="position:absolute;left:61px;top:231.11px;height:12.36px;line-height:12.36px;font-size:10.30px;color:#1a1a1a;font-weight:400;white-space:nowrap;transform:scaleX(0.8929);transform-origin:0 50%;-webkit-text-stroke:0.08px currentColor;">Gate Valve</div><div style="position:absolute;left:55px;top:247.60000000000002px;width:5px;height:1.0px;background:#c4c4c4"></div><div style="position:absolute;left:61px;top:243.22px;height:12.36px;line-height:12.36px;font-size:10.30px;color:#1a1a1a;font-weight:400;white-space:nowrap;transform:scaleX(0.8929);transform-origin:0 50%;-webkit-text-stroke:0.08px currentColor;">Gate Valve Progressive Adjustment</div><div style="position:absolute;left:55px;top:259.70500000000004px;width:5px;height:1.0px;background:#c4c4c4"></div><div style="position:absolute;left:61px;top:255.32px;height:12.36px;line-height:12.36px;font-size:10.30px;color:#1a1a1a;font-weight:400;white-space:nowrap;transform:scaleX(0.8929);transform-origin:0 50%;-webkit-text-stroke:0.08px currentColor;">General Cooling Trap</div><div style="position:absolute;left:55px;top:271.81px;width:5px;height:1.0px;background:#c4c4c4"></div><div style="position:absolute;left:61px;top:267.43px;height:12.36px;line-height:12.36px;font-size:10.30px;color:#1a1a1a;font-weight:400;white-space:nowrap;transform:scaleX(0.8929);transform-origin:0 50%;-webkit-text-stroke:0.08px currentColor;">General Sound Absorber</div><div style="position:absolute;left:55px;top:283.915px;width:5px;height:1.0px;background:#c4c4c4"></div><div style="position:absolute;left:61px;top:279.53px;height:12.36px;line-height:12.36px;font-size:10.30px;color:#1a1a1a;font-weight:400;white-space:nowrap;transform:scaleX(0.8929);transform-origin:0 50%;-webkit-text-stroke:0.08px currentColor;">General Valve</div><div style="position:absolute;left:55px;top:296.02px;width:5px;height:1.0px;background:#c4c4c4"></div><div style="position:absolute;left:61px;top:291.64px;height:12.36px;line-height:12.36px;font-size:10.30px;color:#1a1a1a;font-weight:400;white-space:nowrap;transform:scaleX(0.8929);transform-origin:0 50%;-webkit-text-stroke:0.08px currentColor;">General Vapour Trap</div><div style="position:absolute;left:55px;top:308.125px;width:5px;height:1.0px;background:#c4c4c4"></div><div style="position:absolute;left:61px;top:303.74px;height:12.36px;line-height:12.36px;font-size:10.30px;color:#1a1a1a;font-weight:400;white-space:nowrap;transform:scaleX(0.8929);transform-origin:0 50%;-webkit-text-stroke:0.08px currentColor;">Generic Rotary Valve</div><div style="position:absolute;left:55px;top:320.23px;width:5px;height:1.0px;background:#c4c4c4"></div><div style="position:absolute;left:61px;top:315.85px;height:12.36px;line-height:12.36px;font-size:10.30px;color:#1a1a1a;font-weight:400;white-space:nowrap;transform:scaleX(0.8929);transform-origin:0 50%;-webkit-text-stroke:0.08px currentColor;">Globe Valve</div><div style="position:absolute;left:55px;top:332.33500000000004px;width:5px;height:1.0px;background:#c4c4c4"></div><div style="position:absolute;left:61px;top:327.95px;height:12.36px;line-height:12.36px;font-size:10.30px;color:#1a1a1a;font-weight:400;white-space:nowrap;transform:scaleX(0.8929);transform-origin:0 50%;-webkit-text-stroke:0.08px currentColor;">Hose Clamp</div><div style="position:absolute;left:55px;top:344.44px;width:5px;height:1.0px;background:#c4c4c4"></div><div style="position:absolute;left:61px;top:340.06px;height:12.36px;line-height:12.36px;font-size:10.30px;color:#1a1a1a;font-weight:400;white-space:nowrap;transform:scaleX(0.8929);transform-origin:0 50%;-webkit-text-stroke:0.08px currentColor;">Inspection Glass</div><div style="position:absolute;left:55px;top:356.545px;width:5px;height:1.0px;background:#c4c4c4"></div><div style="position:absolute;left:61px;top:352.16px;height:12.36px;line-height:12.36px;font-size:10.30px;color:#1a1a1a;font-weight:400;white-space:nowrap;transform:scaleX(0.8929);transform-origin:0 50%;-webkit-text-stroke:0.08px currentColor;">IWVALVE</div><div style="position:absolute;left:55px;top:368.65000000000003px;width:5px;height:1.0px;background:#c4c4c4"></div><div style="position:absolute;left:61px;top:364.27px;height:12.36px;line-height:12.36px;font-size:10.30px;color:#1a1a1a;font-weight:400;white-space:nowrap;transform:scaleX(0.8929);transform-origin:0 50%;-webkit-text-stroke:0.08px currentColor;">Knife Valve</div><div style="position:absolute;left:55px;top:380.755px;width:5px;height:1.0px;background:#c4c4c4"></div><div style="position:absolute;left:61px;top:376.37px;height:12.36px;line-height:12.36px;font-size:10.30px;color:#1a1a1a;font-weight:400;white-space:nowrap;transform:scaleX(0.8929);transform-origin:0 50%;-webkit-text-stroke:0.08px currentColor;">Lift Check Valve</div><div style="position:absolute;left:55px;top:392.86px;width:5px;height:1.0px;background:#c4c4c4"></div><div style="position:absolute;left:61px;top:388.48px;height:12.36px;line-height:12.36px;font-size:10.30px;color:#1a1a1a;font-weight:400;white-space:nowrap;transform:scaleX(0.8929);transform-origin:0 50%;-webkit-text-stroke:0.08px currentColor;">Louver Damper</div><div style="position:absolute;left:55px;top:404.96500000000003px;width:5px;height:1.0px;background:#c4c4c4"></div><div style="position:absolute;left:61px;top:400.58px;height:12.36px;line-height:12.36px;font-size:10.30px;color:#1a1a1a;font-weight:400;white-space:nowrap;transform:scaleX(0.8929);transform-origin:0 50%;-webkit-text-stroke:0.08px currentColor;">Mixing Section</div><div style="position:absolute;left:55px;top:417.06999999999994px;width:5px;height:1.0px;background:#c4c4c4"></div><div style="position:absolute;left:61px;top:412.69px;height:12.36px;line-height:12.36px;font-size:10.30px;color:#1a1a1a;font-weight:400;white-space:nowrap;transform:scaleX(0.8929);transform-origin:0 50%;-webkit-text-stroke:0.08px currentColor;">Needle Valve</div><div style="position:absolute;left:55px;top:429.17499999999995px;width:5px;height:1.0px;background:#c4c4c4"></div><div style="position:absolute;left:61px;top:424.79px;height:12.36px;line-height:12.36px;font-size:10.30px;color:#1a1a1a;font-weight:400;white-space:nowrap;transform:scaleX(0.8929);transform-origin:0 50%;-webkit-text-stroke:0.08px currentColor;">Pinch Valve</div><div style="position:absolute;left:55px;top:441.28px;width:5px;height:1.0px;background:#c4c4c4"></div><div style="position:absolute;left:61px;top:436.90px;height:12.36px;line-height:12.36px;font-size:10.30px;color:#1a1a1a;font-weight:400;white-space:nowrap;transform:scaleX(0.8929);transform-origin:0 50%;-webkit-text-stroke:0.08px currentColor;">Plug Valve</div><div style="position:absolute;left:55px;top:453.385px;width:5px;height:1.0px;background:#c4c4c4"></div><div style="position:absolute;left:61px;top:449.00px;height:12.36px;line-height:12.36px;font-size:10.30px;color:#1a1a1a;font-weight:400;white-space:nowrap;transform:scaleX(0.8929);transform-origin:0 50%;-webkit-text-stroke:0.08px currentColor;">Roll Shutter Damper</div><div style="position:absolute;left:55px;top:465.49px;width:5px;height:1.0px;background:#c4c4c4"></div><div style="position:absolute;left:61px;top:461.11px;height:12.36px;line-height:12.36px;font-size:10.30px;color:#1a1a1a;font-weight:400;white-space:nowrap;transform:scaleX(0.8929);transform-origin:0 50%;-webkit-text-stroke:0.08px currentColor;">Rotary Valve</div><div style="position:absolute;left:55px;top:477.595px;width:5px;height:1.0px;background:#c4c4c4"></div><div style="position:absolute;left:61px;top:473.21px;height:12.36px;line-height:12.36px;font-size:10.30px;color:#1a1a1a;font-weight:400;white-space:nowrap;transform:scaleX(0.8929);transform-origin:0 50%;-webkit-text-stroke:0.08px currentColor;">Screwdown Angle Check Valve</div><div style="position:absolute;left:55px;top:489.70000000000005px;width:5px;height:1.0px;background:#c4c4c4"></div><div style="position:absolute;left:61px;top:485.32px;height:12.36px;line-height:12.36px;font-size:10.30px;color:#1a1a1a;font-weight:400;white-space:nowrap;transform:scaleX(0.8929);transform-origin:0 50%;-webkit-text-stroke:0.08px currentColor;">Screwdown Straightway Check Valve</div><div style="position:absolute;left:55px;top:501.80500000000006px;width:5px;height:1.0px;background:#c4c4c4"></div><div style="position:absolute;left:61px;top:497.42px;height:12.36px;line-height:12.36px;font-size:10.30px;color:#1a1a1a;font-weight:400;white-space:nowrap;transform:scaleX(0.8929);transform-origin:0 50%;-webkit-text-stroke:0.08px currentColor;">Stop Check Valve</div><div style="position:absolute;left:55px;top:513.9100000000001px;width:5px;height:1.0px;background:#c4c4c4"></div><div style="position:absolute;left:61px;top:509.53px;height:12.36px;line-height:12.36px;font-size:10.30px;color:#1a1a1a;font-weight:400;white-space:nowrap;transform:scaleX(0.8929);transform-origin:0 50%;-webkit-text-stroke:0.08px currentColor;">Straightway Check Valve</div><div style="position:absolute;left:55px;top:526.015px;width:5px;height:1.0px;background:#c4c4c4"></div><div style="position:absolute;left:61px;top:521.63px;height:12.36px;line-height:12.36px;font-size:10.30px;color:#1a1a1a;font-weight:400;white-space:nowrap;transform:scaleX(0.8929);transform-origin:0 50%;-webkit-text-stroke:0.08px currentColor;">Straightway Pressure Reducing</div></div><div style="position:absolute;left:212px;top:262px;width:3px;height:210px;background:#858585;border-radius:1.5px"></div><div style="position:absolute;left:10px;top:674px;width:133px;height:3px;background:#858585;border-radius:1.5px"></div><div style="position:absolute;left:226px;top:140px;width:621px;height:542.5px;border:1px solid #e0e0e0;border-radius:2px;box-sizing:border-box;border-right:none;border-radius:0"></div><div style="position:absolute;left:229px;top:134.02px;height:12.77px;line-height:12.77px;font-size:10.64px;color:#1a1a1a;font-weight:400;white-space:nowrap;transform:scaleX(0.8929);transform-origin:0 50%;-webkit-text-stroke:0.08px currentColor;background:#f0f0f0">&nbsp;Class settings: Ball Valve&nbsp;</div><div style="position:absolute;left:232px;top:155px;width:386px;height:134px;border:1px solid #e0e0e0;border-radius:2px;box-sizing:border-box;"></div><div style="position:absolute;left:234.5px;top:149.02px;height:12.77px;line-height:12.77px;font-size:10.64px;color:#1a1a1a;font-weight:400;white-space:nowrap;transform:scaleX(0.8929);transform-origin:0 50%;-webkit-text-stroke:0.08px currentColor;background:#f0f0f0">&nbsp;Symbol&nbsp;</div><div style="position:absolute;left:232px;top:298px;width:611px;height:246px;border:1px solid #e0e0e0;border-radius:2px;box-sizing:border-box;"></div><div style="position:absolute;left:234.5px;top:292.02px;height:12.77px;line-height:12.77px;font-size:10.64px;color:#1a1a1a;font-weight:400;white-space:nowrap;transform:scaleX(0.8929);transform-origin:0 50%;-webkit-text-stroke:0.08px currentColor;background:#f0f0f0">&nbsp;Properties&nbsp;</div><div style="position:absolute;left:231px;top:555px;width:281px;height:127.5px;border:1px solid #e0e0e0;border-radius:2px;box-sizing:border-box;"></div><div style="position:absolute;left:234px;top:549.02px;height:12.77px;line-height:12.77px;font-size:10.64px;color:#1a1a1a;font-weight:400;white-space:nowrap;transform:scaleX(0.8929);transform-origin:0 50%;-webkit-text-stroke:0.08px currentColor;background:#f0f0f0">&nbsp;Tag format&nbsp;</div><div style="position:absolute;left:512px;top:555px;width:323px;height:127.5px;border:1px solid #e0e0e0;border-radius:2px;box-sizing:border-box;"></div><div style="position:absolute;left:515px;top:549.02px;height:12.77px;line-height:12.77px;font-size:10.64px;color:#1a1a1a;font-weight:400;white-space:nowrap;transform:scaleX(0.8929);transform-origin:0 50%;-webkit-text-stroke:0.08px currentColor;background:#f0f0f0">&nbsp;Annotation&nbsp;</div><div style="position:absolute;left:237px;top:165px;width:176px;height:15px;background:#fdfdfd;border:1px solid #dadada;border-radius:2px;box-sizing:border-box"></div><div style="position:absolute;left:240px;top:167.55px;height:12.50px;line-height:12.50px;font-size:10.42px;color:#1a1a1a;font-weight:400;white-space:nowrap;transform:scaleX(0.8929);transform-origin:0 50%;-webkit-text-stroke:0.08px currentColor;">Ball Valve Style</div><svg style="position:absolute;left:402px;top:170.5px" width="8" height="5"><path d="M0.5 0.5 L4 4 L7.5 0.5" fill="none" stroke="#555" stroke-width="1"/></svg><div style="position:absolute;left:236px;top:187.8px;width:179px;height:93.39999999999998px;background:#fff"></div><svg style="position:absolute;left:236px;top:187px" width="179" height="94"><g fill="none" stroke="#5a5a5a" stroke-width="1.05"><circle cx="89.2" cy="46.8" r="37.2"/><path d="M4.4 4.4 L4.4 90 L55.6 64.2 M4.4 4.4 L55.6 30.6"/><path d="M174.8 4.4 L174.8 90 L122.8 64.2 M174.8 4.4 L122.8 30.6"/></g></svg><div style="position:absolute;left:446px;top:164px;width:167px;height:17px;background:#fdfdfd;border:1px solid #dcdcdc;border-radius:3px;box-sizing:border-box"></div><div style="position:absolute;left:446px;width:167px;text-align:center;top:166.02px;height:11.96px;line-height:11.96px;font-size:9.97px;color:#1a1a1a;font-weight:400;white-space:nowrap;transform:scaleX(0.8929);transform-origin:50% 50%;-webkit-text-stroke:0.08px currentColor;">Add Symbols...</div><div style="position:absolute;left:446px;top:188.2px;width:167px;height:17.80000000000001px;background:#fdfdfd;border:1px solid #dcdcdc;border-radius:3px;box-sizing:border-box"></div><div style="position:absolute;left:446px;width:167px;text-align:center;top:190.62px;height:11.96px;line-height:11.96px;font-size:9.97px;color:#1a1a1a;font-weight:400;white-space:nowrap;transform:scaleX(0.8929);transform-origin:50% 50%;-webkit-text-stroke:0.08px currentColor;">Edit Symbol...</div><div style="position:absolute;left:446px;top:213px;width:167px;height:17.19999999999999px;background:#fdfdfd;border:1px solid #dcdcdc;border-radius:3px;box-sizing:border-box"></div><div style="position:absolute;left:446px;width:167px;text-align:center;top:215.12px;height:11.96px;line-height:11.96px;font-size:9.97px;color:#1a1a1a;font-weight:400;white-space:nowrap;transform:scaleX(0.8929);transform-origin:50% 50%;-webkit-text-stroke:0.08px currentColor;">Remove Symbol...</div><div style="position:absolute;left:446px;top:238.6px;width:167px;height:17.400000000000006px;background:#fdfdfd;border:1px solid #dcdcdc;border-radius:3px;box-sizing:border-box"></div><div style="position:absolute;left:446px;width:167px;text-align:center;top:240.82px;height:11.96px;line-height:11.96px;font-size:9.97px;color:#1a1a1a;font-weight:400;white-space:nowrap;transform:scaleX(0.8929);transform-origin:50% 50%;-webkit-text-stroke:0.08px currentColor;">Edit Block...</div><div style="position:absolute;left:446px;top:263px;width:167px;height:17.19999999999999px;background:#fdfdfd;border:1px solid #dcdcdc;border-radius:3px;box-sizing:border-box"></div><div style="position:absolute;left:446px;width:167px;text-align:center;top:265.12px;height:11.96px;line-height:11.96px;font-size:9.97px;color:#1a1a1a;font-weight:400;white-space:nowrap;transform:scaleX(0.8929);transform-origin:50% 50%;-webkit-text-stroke:0.08px currentColor;">Add to Tool Palette ...</div><div style="position:absolute;left:237px;top:309px;width:527px;height:230.5px;overflow:hidden"><div style="position:absolute;left:0px;top:0px;width:526px;height:230px;background:#fff;border:1px solid #a0a0a0;border-bottom:none;border-right:none;box-sizing:border-box"></div><div style="position:absolute;left:511.29999999999995px;top:1px;width:14.5px;height:229px;background:#f3f3f3"></div><div style="position:absolute;left:1px;top:25.80000000000001px;width:64.30000000000001px;height:15.46px;background:#f0f4fa"></div><div style="position:absolute;left:65.30000000000001px;top:25.80000000000001px;width:65.0px;height:15.46px;background:#f0f4fa"></div><div style="position:absolute;left:261.4px;top:25.80000000000001px;width:65.39999999999998px;height:15.46px;background:#f0f4fa"></div><div style="position:absolute;left:1px;top:26.30000000000001px;width:64.30000000000001px;height:14.96px;background:#0a78d4"></div><div style="position:absolute;left:1px;top:41.25999999999999px;width:64.30000000000001px;height:15.46px;background:#f0f4fa"></div><div style="position:absolute;left:261.4px;top:41.25999999999999px;width:65.39999999999998px;height:15.46px;background:#f0f4fa"></div><div style="position:absolute;left:1px;top:56.72000000000003px;width:64.30000000000001px;height:15.460000000000008px;background:#f0f4fa"></div><div style="position:absolute;left:261.4px;top:56.72000000000003px;width:65.39999999999998px;height:15.460000000000008px;background:#f0f4fa"></div><div style="position:absolute;left:1px;top:72.18px;width:64.30000000000001px;height:15.460000000000008px;background:#f0f4fa"></div><div style="position:absolute;left:261.4px;top:72.18px;width:65.39999999999998px;height:15.460000000000008px;background:#f0f4fa"></div><div style="position:absolute;left:1px;top:87.63999999999999px;width:64.30000000000001px;height:15.460000000000008px;background:#f0f4fa"></div><div style="position:absolute;left:261.4px;top:87.63999999999999px;width:65.39999999999998px;height:15.460000000000008px;background:#f0f4fa"></div><div style="position:absolute;left:1px;top:103.10000000000002px;width:64.30000000000001px;height:15.460000000000008px;background:#f0f4fa"></div><div style="position:absolute;left:261.4px;top:103.10000000000002px;width:65.39999999999998px;height:15.460000000000008px;background:#f0f4fa"></div><div style="position:absolute;left:1px;top:118.56px;width:64.30000000000001px;height:15.460000000000008px;background:#f0f4fa"></div><div style="position:absolute;left:65.30000000000001px;top:118.56px;width:65.0px;height:15.460000000000008px;background:#f0f4fa"></div><div style="position:absolute;left:261.4px;top:118.56px;width:65.39999999999998px;height:15.460000000000008px;background:#f0f4fa"></div><div style="position:absolute;left:1px;top:134.01999999999998px;width:64.30000000000001px;height:15.460000000000008px;background:#f0f4fa"></div><div style="position:absolute;left:261.4px;top:134.01999999999998px;width:65.39999999999998px;height:15.460000000000008px;background:#f0f4fa"></div><div style="position:absolute;left:1px;top:149.48000000000002px;width:64.30000000000001px;height:15.460000000000008px;background:#f0f4fa"></div><div style="position:absolute;left:65.30000000000001px;top:149.48000000000002px;width:65.0px;height:15.460000000000008px;background:#f0f4fa"></div><div style="position:absolute;left:261.4px;top:149.48000000000002px;width:65.39999999999998px;height:15.460000000000008px;background:#f0f4fa"></div><div style="position:absolute;left:1px;top:164.94000000000005px;width:64.30000000000001px;height:15.460000000000008px;background:#f0f4fa"></div><div style="position:absolute;left:65.30000000000001px;top:164.94000000000005px;width:65.0px;height:15.460000000000008px;background:#f0f4fa"></div><div style="position:absolute;left:261.4px;top:164.94000000000005px;width:65.39999999999998px;height:15.460000000000008px;background:#f0f4fa"></div><div style="position:absolute;left:1px;top:180.40000000000003px;width:64.30000000000001px;height:15.460000000000008px;background:#f0f4fa"></div><div style="position:absolute;left:65.30000000000001px;top:180.40000000000003px;width:65.0px;height:15.460000000000008px;background:#f0f4fa"></div><div style="position:absolute;left:261.4px;top:180.40000000000003px;width:65.39999999999998px;height:15.460000000000008px;background:#f0f4fa"></div><div style="position:absolute;left:1px;top:195.86px;width:64.30000000000001px;height:15.460000000000008px;background:#f0f4fa"></div><div style="position:absolute;left:65.30000000000001px;top:195.86px;width:65.0px;height:15.460000000000008px;background:#f0f4fa"></div><div style="position:absolute;left:261.4px;top:195.86px;width:65.39999999999998px;height:15.460000000000008px;background:#f0f4fa"></div><div style="position:absolute;left:1px;top:211.32000000000005px;width:64.30000000000001px;height:15.460000000000008px;background:#f0f4fa"></div><div style="position:absolute;left:65.30000000000001px;top:211.32000000000005px;width:65.0px;height:15.460000000000008px;background:#f0f4fa"></div><div style="position:absolute;left:261.4px;top:211.32000000000005px;width:65.39999999999998px;height:15.460000000000008px;background:#f0f4fa"></div><div style="position:absolute;left:1px;top:226.77999999999997px;width:64.30000000000001px;height:15.460000000000008px;background:#f0f4fa"></div><div style="position:absolute;left:64.80000000000001px;top:0px;width:1.0px;height:230px;background:#a8a8a8"></div><div style="position:absolute;left:129.8px;top:0px;width:1.0px;height:230px;background:#a8a8a8"></div><div style="position:absolute;left:195.39999999999998px;top:0px;width:1.0px;height:230px;background:#a8a8a8"></div><div style="position:absolute;left:260.9px;top:0px;width:1.0px;height:230px;background:#a8a8a8"></div><div style="position:absolute;left:326.29999999999995px;top:0px;width:1.0px;height:230px;background:#a8a8a8"></div><div style="position:absolute;left:383.5px;top:0px;width:1.0px;height:230px;background:#a8a8a8"></div><div style="position:absolute;left:446.0px;top:0px;width:1.0px;height:230px;background:#a8a8a8"></div><div style="position:absolute;left:510.9px;top:0px;width:1.0px;height:230px;background:#a8a8a8"></div><div style="position:absolute;left:525.8px;top:0px;width:1.0px;height:230px;background:#c2c2c2"></div><div style="position:absolute;left:0px;top:25.80000000000001px;width:526px;height:1.0px;background:#a8a8a8"></div><div style="position:absolute;left:0px;top:41.25999999999999px;width:511.29999999999995px;height:1.0px;background:#b8b8b8"></div><div style="position:absolute;left:0px;top:56.72000000000003px;width:511.29999999999995px;height:1.0px;background:#b8b8b8"></div><div style="position:absolute;left:0px;top:72.18px;width:511.29999999999995px;height:1.0px;background:#b8b8b8"></div><div style="position:absolute;left:0px;top:87.63999999999999px;width:511.29999999999995px;height:1.0px;background:#b8b8b8"></div><div style="position:absolute;left:0px;top:103.10000000000002px;width:511.29999999999995px;height:1.0px;background:#b8b8b8"></div><div style="position:absolute;left:0px;top:118.56px;width:511.29999999999995px;height:1.0px;background:#b8b8b8"></div><div style="position:absolute;left:0px;top:134.01999999999998px;width:511.29999999999995px;height:1.0px;background:#b8b8b8"></div><div style="position:absolute;left:0px;top:149.48000000000002px;width:511.29999999999995px;height:1.0px;background:#b8b8b8"></div><div style="position:absolute;left:0px;top:164.94000000000005px;width:511.29999999999995px;height:1.0px;background:#b8b8b8"></div><div style="position:absolute;left:0px;top:180.40000000000003px;width:511.29999999999995px;height:1.0px;background:#b8b8b8"></div><div style="position:absolute;left:0px;top:195.86px;width:511.29999999999995px;height:1.0px;background:#b8b8b8"></div><div style="position:absolute;left:0px;top:211.32000000000005px;width:511.29999999999995px;height:1.0px;background:#b8b8b8"></div><div style="position:absolute;left:0px;top:226.77999999999997px;width:511.29999999999995px;height:1.0px;background:#b8b8b8"></div><div style="position:absolute;left:0px;top:242.24px;width:511.29999999999995px;height:1.0px;background:#b8b8b8"></div><div style="position:absolute;left:5px;top:2.82px;height:12.36px;line-height:12.36px;font-size:10.30px;color:#1a1a1a;font-weight:400;white-space:nowrap;transform:scaleX(0.8929);transform-origin:0 50%;-webkit-text-stroke:0.08px currentColor;">Property</div><div style="position:absolute;left:5px;top:13.72px;height:12.36px;line-height:12.36px;font-size:10.30px;color:#1a1a1a;font-weight:400;white-space:nowrap;transform:scaleX(0.8929);transform-origin:0 50%;-webkit-text-stroke:0.08px currentColor;">Name</div><div style="position:absolute;left:70.30000000000001px;top:2.82px;height:12.36px;line-height:12.36px;font-size:10.30px;color:#1a1a1a;font-weight:400;white-space:nowrap;transform:scaleX(0.8929);transform-origin:0 50%;-webkit-text-stroke:0.08px currentColor;">Property</div><div style="position:absolute;left:70.30000000000001px;top:13.72px;height:12.36px;line-height:12.36px;font-size:10.30px;color:#1a1a1a;font-weight:400;white-space:nowrap;transform:scaleX(0.8929);transform-origin:0 50%;-webkit-text-stroke:0.08px currentColor;">Description</div><div style="position:absolute;left:135.3px;top:2.82px;height:12.36px;line-height:12.36px;font-size:10.30px;color:#1a1a1a;font-weight:400;white-space:nowrap;transform:scaleX(0.8929);transform-origin:0 50%;-webkit-text-stroke:0.08px currentColor;">Display</div><div style="position:absolute;left:135.3px;top:13.72px;height:12.36px;line-height:12.36px;font-size:10.30px;color:#1a1a1a;font-weight:400;white-space:nowrap;transform:scaleX(0.8929);transform-origin:0 50%;-webkit-text-stroke:0.08px currentColor;">Name</div><div style="position:absolute;left:200.89999999999998px;top:8.12px;height:12.36px;line-height:12.36px;font-size:10.30px;color:#1a1a1a;font-weight:400;white-space:nowrap;transform:scaleX(0.8929);transform-origin:0 50%;-webkit-text-stroke:0.08px currentColor;">Default Value</div><div style="position:absolute;left:266.4px;top:8.12px;height:12.36px;line-height:12.36px;font-size:10.30px;color:#1a1a1a;font-weight:400;white-space:nowrap;transform:scaleX(0.8929);transform-origin:0 50%;-webkit-text-stroke:0.08px currentColor;">Property Type</div><div style="position:absolute;left:331.79999999999995px;top:8.12px;height:12.36px;line-height:12.36px;font-size:10.30px;color:#1a1a1a;font-weight:400;white-space:nowrap;transform:scaleX(0.8929);transform-origin:0 50%;-webkit-text-stroke:0.08px currentColor;">Acquisition</div><div style="position:absolute;left:3px;top:29.25px;height:12.36px;line-height:12.36px;font-size:10.30px;color:#ffffff;font-weight:400;white-space:nowrap;transform:scaleX(0.8929);transform-origin:0 50%;-webkit-text-stroke:0.08px currentColor;">*ClassName</div><div style="position:absolute;left:68.30000000000001px;top:29.25px;height:12.36px;line-height:12.36px;font-size:10.30px;color:#1a1a1a;font-weight:400;white-space:nowrap;transform:scaleX(0.8929);transform-origin:0 50%;-webkit-text-stroke:0.08px currentColor;">System prop...</div><div style="position:absolute;left:133.3px;top:29.25px;height:12.36px;line-height:12.36px;font-size:10.30px;color:#1a1a1a;font-weight:400;white-space:nowrap;transform:scaleX(0.8929);transform-origin:0 50%;-webkit-text-stroke:0.08px currentColor;">Class Name</div><div style="position:absolute;left:198.89999999999998px;top:29.25px;height:12.36px;line-height:12.36px;font-size:10.30px;color:#1a1a1a;font-weight:400;white-space:nowrap;transform:scaleX(0.8929);transform-origin:0 50%;-webkit-text-stroke:0.08px currentColor;">Ball Valve</div><div style="position:absolute;left:264.4px;top:29.25px;height:12.36px;line-height:12.36px;font-size:10.30px;color:#1a1a1a;font-weight:400;white-space:nowrap;transform:scaleX(0.8929);transform-origin:0 50%;-webkit-text-stroke:0.08px currentColor;">String</div><div style="position:absolute;left:329.79999999999995px;top:29.25px;height:12.36px;line-height:12.36px;font-size:10.30px;color:#1a1a1a;font-weight:400;white-space:nowrap;transform:scaleX(0.8929);transform-origin:0 50%;-webkit-text-stroke:0.08px currentColor;">None</div><div style="position:absolute;left:409.70000000000005px;top:28.03000000000003px;width:11.0px;height:11.0px;border:1px solid #9c9c9c;border-radius:2.5px;box-sizing:border-box;background:#fff"></div><div style="position:absolute;left:473.29999999999995px;top:28.03000000000003px;width:11.0px;height:11.0px;background:#0b62c4;border-radius:2px"></div><svg style="position:absolute;left:474.79999999999995px;top:29.53000000000003px" width="8" height="8"><path d="M1.2 4.2 L3.2 6.2 L6.8 2" fill="none" stroke="#fff" stroke-width="1"/></svg><div style="position:absolute;left:3px;top:44.71px;height:12.36px;line-height:12.36px;font-size:10.30px;color:#1a1a1a;font-weight:400;white-space:nowrap;transform:scaleX(0.8929);transform-origin:0 50%;-webkit-text-stroke:0.08px currentColor;">*Description</div><div style="position:absolute;left:133.3px;top:44.71px;height:12.36px;line-height:12.36px;font-size:10.30px;color:#1a1a1a;font-weight:400;white-space:nowrap;transform:scaleX(0.8929);transform-origin:0 50%;-webkit-text-stroke:0.08px currentColor;">Description</div><div style="position:absolute;left:198.89999999999998px;top:44.71px;height:12.36px;line-height:12.36px;font-size:10.30px;color:#1a1a1a;font-weight:400;white-space:nowrap;transform:scaleX(0.8929);transform-origin:0 50%;-webkit-text-stroke:0.08px currentColor;">BALL VALVE</div><div style="position:absolute;left:264.4px;top:44.71px;height:12.36px;line-height:12.36px;font-size:10.30px;color:#1a1a1a;font-weight:400;white-space:nowrap;transform:scaleX(0.8929);transform-origin:0 50%;-webkit-text-stroke:0.08px currentColor;">String</div><div style="position:absolute;left:329.79999999999995px;top:44.71px;height:12.36px;line-height:12.36px;font-size:10.30px;color:#1a1a1a;font-weight:400;white-space:nowrap;transform:scaleX(0.8929);transform-origin:0 50%;-webkit-text-stroke:0.08px currentColor;">None</div><div style="position:absolute;left:409.70000000000005px;top:43.49000000000001px;width:11.0px;height:11.0px;border:1px solid #9c9c9c;border-radius:2.5px;box-sizing:border-box;background:#fff"></div><div style="position:absolute;left:473.29999999999995px;top:43.49000000000001px;width:11.0px;height:11.0px;background:#0b62c4;border-radius:2px"></div><svg style="position:absolute;left:474.79999999999995px;top:44.99000000000001px" width="8" height="8"><path d="M1.2 4.2 L3.2 6.2 L6.8 2" fill="none" stroke="#fff" stroke-width="1"/></svg><div style="position:absolute;left:3px;top:60.17px;height:12.36px;line-height:12.36px;font-size:10.30px;color:#1a1a1a;font-weight:400;white-space:nowrap;transform:scaleX(0.8929);transform-origin:0 50%;-webkit-text-stroke:0.08px currentColor;">*Manufacturer</div><div style="position:absolute;left:133.3px;top:60.17px;height:12.36px;line-height:12.36px;font-size:10.30px;color:#1a1a1a;font-weight:400;white-space:nowrap;transform:scaleX(0.8929);transform-origin:0 50%;-webkit-text-stroke:0.08px currentColor;">Manufacturer</div><div style="position:absolute;left:264.4px;top:60.17px;height:12.36px;line-height:12.36px;font-size:10.30px;color:#1a1a1a;font-weight:400;white-space:nowrap;transform:scaleX(0.8929);transform-origin:0 50%;-webkit-text-stroke:0.08px currentColor;">String</div><div style="position:absolute;left:329.79999999999995px;top:60.17px;height:12.36px;line-height:12.36px;font-size:10.30px;color:#1a1a1a;font-weight:400;white-space:nowrap;transform:scaleX(0.8929);transform-origin:0 50%;-webkit-text-stroke:0.08px currentColor;">None</div><div style="position:absolute;left:409.70000000000005px;top:58.950000000000045px;width:11.0px;height:11.0px;border:1px solid #9c9c9c;border-radius:2.5px;box-sizing:border-box;background:#fff"></div><div style="position:absolute;left:473.29999999999995px;top:58.950000000000045px;width:11.0px;height:11.0px;background:#0b62c4;border-radius:2px"></div><svg style="position:absolute;left:474.79999999999995px;top:60.450000000000045px" width="8" height="8"><path d="M1.2 4.2 L3.2 6.2 L6.8 2" fill="none" stroke="#fff" stroke-width="1"/></svg><div style="position:absolute;left:3px;top:75.63px;height:12.36px;line-height:12.36px;font-size:10.30px;color:#1a1a1a;font-weight:400;white-space:nowrap;transform:scaleX(0.8929);transform-origin:0 50%;-webkit-text-stroke:0.08px currentColor;">*ModelNumb...</div><div style="position:absolute;left:133.3px;top:75.63px;height:12.36px;line-height:12.36px;font-size:10.30px;color:#1a1a1a;font-weight:400;white-space:nowrap;transform:scaleX(0.8929);transform-origin:0 50%;-webkit-text-stroke:0.08px currentColor;">Model Numb...</div><div style="position:absolute;left:264.4px;top:75.63px;height:12.36px;line-height:12.36px;font-size:10.30px;color:#1a1a1a;font-weight:400;white-space:nowrap;transform:scaleX(0.8929);transform-origin:0 50%;-webkit-text-stroke:0.08px currentColor;">String</div><div style="position:absolute;left:329.79999999999995px;top:75.63px;height:12.36px;line-height:12.36px;font-size:10.30px;color:#1a1a1a;font-weight:400;white-space:nowrap;transform:scaleX(0.8929);transform-origin:0 50%;-webkit-text-stroke:0.08px currentColor;">None</div><div style="position:absolute;left:409.70000000000005px;top:74.41000000000003px;width:11.0px;height:11.0px;border:1px solid #9c9c9c;border-radius:2.5px;box-sizing:border-box;background:#fff"></div><div style="position:absolute;left:473.29999999999995px;top:74.41000000000003px;width:11.0px;height:11.0px;background:#0b62c4;border-radius:2px"></div><svg style="position:absolute;left:474.79999999999995px;top:75.91000000000003px" width="8" height="8"><path d="M1.2 4.2 L3.2 6.2 L6.8 2" fill="none" stroke="#fff" stroke-width="1"/></svg><div style="position:absolute;left:3px;top:91.09px;height:12.36px;line-height:12.36px;font-size:10.30px;color:#1a1a1a;font-weight:400;white-space:nowrap;transform:scaleX(0.8929);transform-origin:0 50%;-webkit-text-stroke:0.08px currentColor;">*Supplier</div><div style="position:absolute;left:133.3px;top:91.09px;height:12.36px;line-height:12.36px;font-size:10.30px;color:#1a1a1a;font-weight:400;white-space:nowrap;transform:scaleX(0.8929);transform-origin:0 50%;-webkit-text-stroke:0.08px currentColor;">Supplier</div><div style="position:absolute;left:264.4px;top:91.09px;height:12.36px;line-height:12.36px;font-size:10.30px;color:#1a1a1a;font-weight:400;white-space:nowrap;transform:scaleX(0.8929);transform-origin:0 50%;-webkit-text-stroke:0.08px currentColor;">String</div><div style="position:absolute;left:329.79999999999995px;top:91.09px;height:12.36px;line-height:12.36px;font-size:10.30px;color:#1a1a1a;font-weight:400;white-space:nowrap;transform:scaleX(0.8929);transform-origin:0 50%;-webkit-text-stroke:0.08px currentColor;">None</div><div style="position:absolute;left:409.70000000000005px;top:89.87px;width:11.0px;height:11.0px;border:1px solid #9c9c9c;border-radius:2.5px;box-sizing:border-box;background:#fff"></div><div style="position:absolute;left:473.29999999999995px;top:89.87px;width:11.0px;height:11.0px;background:#0b62c4;border-radius:2px"></div><svg style="position:absolute;left:474.79999999999995px;top:91.37px" width="8" height="8"><path d="M1.2 4.2 L3.2 6.2 L6.8 2" fill="none" stroke="#fff" stroke-width="1"/></svg><div style="position:absolute;left:3px;top:106.55px;height:12.36px;line-height:12.36px;font-size:10.30px;color:#1a1a1a;font-weight:400;white-space:nowrap;transform:scaleX(0.8929);transform-origin:0 50%;-webkit-text-stroke:0.08px currentColor;">*Comment</div><div style="position:absolute;left:133.3px;top:106.55px;height:12.36px;line-height:12.36px;font-size:10.30px;color:#1a1a1a;font-weight:400;white-space:nowrap;transform:scaleX(0.8929);transform-origin:0 50%;-webkit-text-stroke:0.08px currentColor;">Comment</div><div style="position:absolute;left:264.4px;top:106.55px;height:12.36px;line-height:12.36px;font-size:10.30px;color:#1a1a1a;font-weight:400;white-space:nowrap;transform:scaleX(0.8929);transform-origin:0 50%;-webkit-text-stroke:0.08px currentColor;">String</div><div style="position:absolute;left:329.79999999999995px;top:106.55px;height:12.36px;line-height:12.36px;font-size:10.30px;color:#1a1a1a;font-weight:400;white-space:nowrap;transform:scaleX(0.8929);transform-origin:0 50%;-webkit-text-stroke:0.08px currentColor;">None</div><div style="position:absolute;left:409.70000000000005px;top:105.33000000000004px;width:11.0px;height:11.0px;border:1px solid #9c9c9c;border-radius:2.5px;box-sizing:border-box;background:#fff"></div><div style="position:absolute;left:473.29999999999995px;top:105.33000000000004px;width:11.0px;height:11.0px;background:#0b62c4;border-radius:2px"></div><svg style="position:absolute;left:474.79999999999995px;top:106.83000000000004px" width="8" height="8"><path d="M1.2 4.2 L3.2 6.2 L6.8 2" fill="none" stroke="#fff" stroke-width="1"/></svg><div style="position:absolute;left:3px;top:122.01px;height:12.36px;line-height:12.36px;font-size:10.30px;color:#1a1a1a;font-weight:400;white-space:nowrap;transform:scaleX(0.8929);transform-origin:0 50%;-webkit-text-stroke:0.08px currentColor;">*Status</div><div style="position:absolute;left:68.30000000000001px;top:122.01px;height:12.36px;line-height:12.36px;font-size:10.30px;color:#1a1a1a;font-weight:400;white-space:nowrap;transform:scaleX(0.8929);transform-origin:0 50%;-webkit-text-stroke:0.08px currentColor;">System prop...</div><div style="position:absolute;left:133.3px;top:122.01px;height:12.36px;line-height:12.36px;font-size:10.30px;color:#1a1a1a;font-weight:400;white-space:nowrap;transform:scaleX(0.8929);transform-origin:0 50%;-webkit-text-stroke:0.08px currentColor;">Status</div><div style="position:absolute;left:198.89999999999998px;top:122.01px;height:12.36px;line-height:12.36px;font-size:10.30px;color:#1a1a1a;font-weight:400;white-space:nowrap;transform:scaleX(0.8929);transform-origin:0 50%;-webkit-text-stroke:0.08px currentColor;">Acquisiti...</div><svg style="position:absolute;left:250.39999999999998px;top:123.79000000000002px" width="8" height="5"><path d="M0.5 0.5 L4 4 L7.5 0.5" fill="none" stroke="#666" stroke-width="1"/></svg><div style="position:absolute;left:246.39999999999998px;top:119.29000000000002px;width:1.0px;height:14.0px;background:#d8d8d8"></div><div style="position:absolute;left:264.4px;top:122.01px;height:12.36px;line-height:12.36px;font-size:10.30px;color:#1a1a1a;font-weight:400;white-space:nowrap;transform:scaleX(0.8929);transform-origin:0 50%;-webkit-text-stroke:0.08px currentColor;">List</div><div style="position:absolute;left:329.79999999999995px;top:122.01px;height:12.36px;line-height:12.36px;font-size:10.30px;color:#1a1a1a;font-weight:400;white-space:nowrap;transform:scaleX(0.8929);transform-origin:0 50%;-webkit-text-stroke:0.08px currentColor;">Pipe Line ...</div><div style="position:absolute;left:409.70000000000005px;top:120.79000000000002px;width:11.0px;height:11.0px;border:1px solid #9c9c9c;border-radius:2.5px;box-sizing:border-box;background:#fff"></div><div style="position:absolute;left:473.29999999999995px;top:120.79000000000002px;width:11.0px;height:11.0px;background:#0b62c4;border-radius:2px"></div><svg style="position:absolute;left:474.79999999999995px;top:122.29000000000002px" width="8" height="8"><path d="M1.2 4.2 L3.2 6.2 L6.8 2" fill="none" stroke="#fff" stroke-width="1"/></svg><div style="position:absolute;left:3px;top:137.47px;height:12.36px;line-height:12.36px;font-size:10.30px;color:#1a1a1a;font-weight:400;white-space:nowrap;transform:scaleX(0.8929);transform-origin:0 50%;-webkit-text-stroke:0.08px currentColor;">*ParamOnLi...</div><div style="position:absolute;left:133.3px;top:137.47px;height:12.36px;line-height:12.36px;font-size:10.30px;color:#1a1a1a;font-weight:400;white-space:nowrap;transform:scaleX(0.8929);transform-origin:0 50%;-webkit-text-stroke:0.08px currentColor;">ParamOnLine</div><div style="position:absolute;left:264.4px;top:137.47px;height:12.36px;line-height:12.36px;font-size:10.30px;color:#1a1a1a;font-weight:400;white-space:nowrap;transform:scaleX(0.8929);transform-origin:0 50%;-webkit-text-stroke:0.08px currentColor;">String</div><div style="position:absolute;left:329.79999999999995px;top:137.47px;height:12.36px;line-height:12.36px;font-size:10.30px;color:#1a1a1a;font-weight:400;white-space:nowrap;transform:scaleX(0.8929);transform-origin:0 50%;-webkit-text-stroke:0.08px currentColor;">None</div><div style="position:absolute;left:409.70000000000005px;top:136.25px;width:11.0px;height:11.0px;border:1px solid #9c9c9c;border-radius:2.5px;box-sizing:border-box;background:#fff"></div><div style="position:absolute;left:473.29999999999995px;top:136.25px;width:11.0px;height:11.0px;background:#0b62c4;border-radius:2px"></div><svg style="position:absolute;left:474.79999999999995px;top:137.75px" width="8" height="8"><path d="M1.2 4.2 L3.2 6.2 L6.8 2" fill="none" stroke="#fff" stroke-width="1"/></svg><div style="position:absolute;left:3px;top:152.93px;height:12.36px;line-height:12.36px;font-size:10.30px;color:#1a1a1a;font-weight:400;white-space:nowrap;transform:scaleX(0.8929);transform-origin:0 50%;-webkit-text-stroke:0.08px currentColor;">*Size</div><div style="position:absolute;left:68.30000000000001px;top:152.93px;height:12.36px;line-height:12.36px;font-size:10.30px;color:#1a1a1a;font-weight:400;white-space:nowrap;transform:scaleX(0.8929);transform-origin:0 50%;-webkit-text-stroke:0.08px currentColor;">System prop...</div><div style="position:absolute;left:133.3px;top:152.93px;height:12.36px;line-height:12.36px;font-size:10.30px;color:#1a1a1a;font-weight:400;white-space:nowrap;transform:scaleX(0.8929);transform-origin:0 50%;-webkit-text-stroke:0.08px currentColor;">Size</div><div style="position:absolute;left:198.89999999999998px;top:152.93px;height:12.36px;line-height:12.36px;font-size:10.30px;color:#1a1a1a;font-weight:400;white-space:nowrap;transform:scaleX(0.8929);transform-origin:0 50%;-webkit-text-stroke:0.08px currentColor;">Acquisiti...</div><svg style="position:absolute;left:250.39999999999998px;top:154.71000000000004px" width="8" height="5"><path d="M0.5 0.5 L4 4 L7.5 0.5" fill="none" stroke="#666" stroke-width="1"/></svg><div style="position:absolute;left:246.39999999999998px;top:150.21000000000004px;width:1.0px;height:14.0px;background:#d8d8d8"></div><div style="position:absolute;left:264.4px;top:152.93px;height:12.36px;line-height:12.36px;font-size:10.30px;color:#1a1a1a;font-weight:400;white-space:nowrap;transform:scaleX(0.8929);transform-origin:0 50%;-webkit-text-stroke:0.08px currentColor;">List</div><div style="position:absolute;left:329.79999999999995px;top:152.93px;height:12.36px;line-height:12.36px;font-size:10.30px;color:#1a1a1a;font-weight:400;white-space:nowrap;transform:scaleX(0.8929);transform-origin:0 50%;-webkit-text-stroke:0.08px currentColor;">Pipe Line ...</div><div style="position:absolute;left:409.70000000000005px;top:151.71000000000004px;width:11.0px;height:11.0px;border:1px solid #9c9c9c;border-radius:2.5px;box-sizing:border-box;background:#fff"></div><div style="position:absolute;left:473.29999999999995px;top:151.71000000000004px;width:11.0px;height:11.0px;background:#0b62c4;border-radius:2px"></div><svg style="position:absolute;left:474.79999999999995px;top:153.21000000000004px" width="8" height="8"><path d="M1.2 4.2 L3.2 6.2 L6.8 2" fill="none" stroke="#fff" stroke-width="1"/></svg><div style="position:absolute;left:3px;top:168.39px;height:12.36px;line-height:12.36px;font-size:10.30px;color:#1a1a1a;font-weight:400;white-space:nowrap;transform:scaleX(0.8929);transform-origin:0 50%;-webkit-text-stroke:0.08px currentColor;">*Spec</div><div style="position:absolute;left:68.30000000000001px;top:168.39px;height:12.36px;line-height:12.36px;font-size:10.30px;color:#1a1a1a;font-weight:400;white-space:nowrap;transform:scaleX(0.8929);transform-origin:0 50%;-webkit-text-stroke:0.08px currentColor;">System prop...</div><div style="position:absolute;left:133.3px;top:168.39px;height:12.36px;line-height:12.36px;font-size:10.30px;color:#1a1a1a;font-weight:400;white-space:nowrap;transform:scaleX(0.8929);transform-origin:0 50%;-webkit-text-stroke:0.08px currentColor;">Spec</div><div style="position:absolute;left:198.89999999999998px;top:168.39px;height:12.36px;line-height:12.36px;font-size:10.30px;color:#1a1a1a;font-weight:400;white-space:nowrap;transform:scaleX(0.8929);transform-origin:0 50%;-webkit-text-stroke:0.08px currentColor;">Acquisiti...</div><svg style="position:absolute;left:250.39999999999998px;top:170.17000000000007px" width="8" height="5"><path d="M0.5 0.5 L4 4 L7.5 0.5" fill="none" stroke="#666" stroke-width="1"/></svg><div style="position:absolute;left:246.39999999999998px;top:165.67000000000007px;width:1.0px;height:14.0px;background:#d8d8d8"></div><div style="position:absolute;left:264.4px;top:168.39px;height:12.36px;line-height:12.36px;font-size:10.30px;color:#1a1a1a;font-weight:400;white-space:nowrap;transform:scaleX(0.8929);transform-origin:0 50%;-webkit-text-stroke:0.08px currentColor;">List</div><div style="position:absolute;left:329.79999999999995px;top:168.39px;height:12.36px;line-height:12.36px;font-size:10.30px;color:#1a1a1a;font-weight:400;white-space:nowrap;transform:scaleX(0.8929);transform-origin:0 50%;-webkit-text-stroke:0.08px currentColor;">Pipe Line ...</div><div style="position:absolute;left:409.70000000000005px;top:167.17000000000007px;width:11.0px;height:11.0px;border:1px solid #9c9c9c;border-radius:2.5px;box-sizing:border-box;background:#fff"></div><div style="position:absolute;left:473.29999999999995px;top:167.17000000000007px;width:11.0px;height:11.0px;background:#0b62c4;border-radius:2px"></div><svg style="position:absolute;left:474.79999999999995px;top:168.67000000000007px" width="8" height="8"><path d="M1.2 4.2 L3.2 6.2 L6.8 2" fill="none" stroke="#fff" stroke-width="1"/></svg><div style="position:absolute;left:3px;top:183.85px;height:12.36px;line-height:12.36px;font-size:10.30px;color:#1a1a1a;font-weight:400;white-space:nowrap;transform:scaleX(0.8929);transform-origin:0 50%;-webkit-text-stroke:0.08px currentColor;">*Spec Part</div><div style="position:absolute;left:68.30000000000001px;top:183.85px;height:12.36px;line-height:12.36px;font-size:10.30px;color:#1a1a1a;font-weight:400;white-space:nowrap;transform:scaleX(0.8929);transform-origin:0 50%;-webkit-text-stroke:0.08px currentColor;">System prop...</div><div style="position:absolute;left:133.3px;top:183.85px;height:12.36px;line-height:12.36px;font-size:10.30px;color:#1a1a1a;font-weight:400;white-space:nowrap;transform:scaleX(0.8929);transform-origin:0 50%;-webkit-text-stroke:0.08px currentColor;">Spec Part</div><div style="position:absolute;left:264.4px;top:183.85px;height:12.36px;line-height:12.36px;font-size:10.30px;color:#1a1a1a;font-weight:400;white-space:nowrap;transform:scaleX(0.8929);transform-origin:0 50%;-webkit-text-stroke:0.08px currentColor;">String</div><div style="position:absolute;left:329.79999999999995px;top:183.85px;height:12.36px;line-height:12.36px;font-size:10.30px;color:#1a1a1a;font-weight:400;white-space:nowrap;transform:scaleX(0.8929);transform-origin:0 50%;-webkit-text-stroke:0.08px currentColor;">None</div><div style="position:absolute;left:409.70000000000005px;top:182.63000000000005px;width:11.0px;height:11.0px;border:1px solid #9c9c9c;border-radius:2.5px;box-sizing:border-box;background:#fff"></div><div style="position:absolute;left:473.29999999999995px;top:182.63000000000005px;width:11.0px;height:11.0px;background:#0b62c4;border-radius:2px"></div><svg style="position:absolute;left:474.79999999999995px;top:184.13000000000005px" width="8" height="8"><path d="M1.2 4.2 L3.2 6.2 L6.8 2" fill="none" stroke="#fff" stroke-width="1"/></svg><div style="position:absolute;left:3px;top:199.31px;height:12.36px;line-height:12.36px;font-size:10.30px;color:#1a1a1a;font-weight:400;white-space:nowrap;transform:scaleX(0.8929);transform-origin:0 50%;-webkit-text-stroke:0.08px currentColor;">*SpecPartG...</div><div style="position:absolute;left:68.30000000000001px;top:199.31px;height:12.36px;line-height:12.36px;font-size:10.30px;color:#1a1a1a;font-weight:400;white-space:nowrap;transform:scaleX(0.8929);transform-origin:0 50%;-webkit-text-stroke:0.08px currentColor;">System prop...</div><div style="position:absolute;left:133.3px;top:199.31px;height:12.36px;line-height:12.36px;font-size:10.30px;color:#1a1a1a;font-weight:400;white-space:nowrap;transform:scaleX(0.8929);transform-origin:0 50%;-webkit-text-stroke:0.08px currentColor;">Spec Part G...</div><div style="position:absolute;left:264.4px;top:199.31px;height:12.36px;line-height:12.36px;font-size:10.30px;color:#1a1a1a;font-weight:400;white-space:nowrap;transform:scaleX(0.8929);transform-origin:0 50%;-webkit-text-stroke:0.08px currentColor;">String</div><div style="position:absolute;left:329.79999999999995px;top:199.31px;height:12.36px;line-height:12.36px;font-size:10.30px;color:#1a1a1a;font-weight:400;white-space:nowrap;transform:scaleX(0.8929);transform-origin:0 50%;-webkit-text-stroke:0.08px currentColor;">None</div><div style="position:absolute;left:409.70000000000005px;top:198.09000000000003px;width:11.0px;height:11.0px;border:1px solid #9c9c9c;border-radius:2.5px;box-sizing:border-box;background:#fff"></div><div style="position:absolute;left:473.29999999999995px;top:198.09000000000003px;width:11.0px;height:11.0px;border:1px solid #9c9c9c;border-radius:2.5px;box-sizing:border-box;background:#fff"></div><div style="position:absolute;left:3px;top:214.77px;height:12.36px;line-height:12.36px;font-size:10.30px;color:#1a1a1a;font-weight:400;white-space:nowrap;transform:scaleX(0.8929);transform-origin:0 50%;-webkit-text-stroke:0.08px currentColor;">*Tag</div><div style="position:absolute;left:68.30000000000001px;top:214.77px;height:12.36px;line-height:12.36px;font-size:10.30px;color:#1a1a1a;font-weight:400;white-space:nowrap;transform:scaleX(0.8929);transform-origin:0 50%;-webkit-text-stroke:0.08px currentColor;">System prop...</div><div style="position:absolute;left:133.3px;top:214.77px;height:12.36px;line-height:12.36px;font-size:10.30px;color:#1a1a1a;font-weight:400;white-space:nowrap;transform:scaleX(0.8929);transform-origin:0 50%;-webkit-text-stroke:0.08px currentColor;">Tag</div><div style="position:absolute;left:264.4px;top:214.77px;height:12.36px;line-height:12.36px;font-size:10.30px;color:#1a1a1a;font-weight:400;white-space:nowrap;transform:scaleX(0.8929);transform-origin:0 50%;-webkit-text-stroke:0.08px currentColor;">String</div><div style="position:absolute;left:329.79999999999995px;top:214.77px;height:12.36px;line-height:12.36px;font-size:10.30px;color:#1a1a1a;font-weight:400;white-space:nowrap;transform:scaleX(0.8929);transform-origin:0 50%;-webkit-text-stroke:0.08px currentColor;">None</div><div style="position:absolute;left:409.70000000000005px;top:213.55000000000007px;width:11.0px;height:11.0px;border:1px solid #9c9c9c;border-radius:2.5px;box-sizing:border-box;background:#fff"></div><div style="position:absolute;left:473.29999999999995px;top:213.55000000000007px;width:11.0px;height:11.0px;background:#0b62c4;border-radius:2px"></div><svg style="position:absolute;left:474.79999999999995px;top:215.05000000000007px" width="8" height="8"><path d="M1.2 4.2 L3.2 6.2 L6.8 2" fill="none" stroke="#fff" stroke-width="1"/></svg><div style="position:absolute;left:473.29999999999995px;top:229.01px;width:11.0px;height:2.5px;background:#0b62c4"></div><div style="position:absolute;left:409.70000000000005px;top:229.01px;width:11.0px;height:2.5px;border:1px solid #8a8a8a;border-bottom:none;box-sizing:border-box"></div></div><div style="position:absolute;left:234.5px;top:563px;width:191.5px;height:79.60000000000002px;background:#fff;border:1px solid #adadad;box-sizing:border-box"></div><div style="position:absolute;left:237px;top:565.42px;height:12.36px;line-height:12.36px;font-size:10.30px;color:#1a1a1a;font-weight:400;white-space:nowrap;transform:scaleX(0.8929);transform-origin:0 50%;-webkit-text-stroke:0.08px currentColor;">ball Valve</div><div style="position:absolute;left:237px;top:576.32px;height:12.36px;line-height:12.36px;font-size:10.30px;color:#1a1a1a;font-weight:400;white-space:nowrap;transform:scaleX(0.8929);transform-origin:0 50%;-webkit-text-stroke:0.08px currentColor;">Hand Valve Tag [Code-Number]</div><div style="position:absolute;left:429.6px;top:566.5px;width:68.39999999999998px;height:18.700000000000045px;background:#fdfdfd;border:1px solid #dcdcdc;border-radius:3px;box-sizing:border-box"></div><div style="position:absolute;left:429.6px;width:68.39999999999998px;text-align:center;top:569.37px;height:11.96px;line-height:11.96px;font-size:9.97px;color:#1a1a1a;font-weight:400;white-space:nowrap;transform:scaleX(0.8929);transform-origin:50% 50%;-webkit-text-stroke:0.08px currentColor;">New...</div><div style="position:absolute;left:429.6px;top:591.3px;width:68.39999999999998px;height:17.90000000000009px;background:#f5f5f5;border:1px solid #e8e8e8;border-radius:3px;box-sizing:border-box"></div><div style="position:absolute;left:429.6px;width:68.39999999999998px;text-align:center;top:593.77px;height:11.96px;line-height:11.96px;font-size:9.97px;color:#a8a8a8;font-weight:400;white-space:nowrap;transform:scaleX(0.8929);transform-origin:50% 50%;-webkit-text-stroke:0.08px currentColor;">Modify...</div><div style="position:absolute;left:429.6px;top:616.4px;width:68.39999999999998px;height:18.100000000000023px;background:#f5f5f5;border:1px solid #e8e8e8;border-radius:3px;box-sizing:border-box"></div><div style="position:absolute;left:429.6px;width:68.39999999999998px;text-align:center;top:618.97px;height:11.96px;line-height:11.96px;font-size:9.97px;color:#a8a8a8;font-weight:400;white-space:nowrap;transform:scaleX(0.8929);transform-origin:50% 50%;-webkit-text-stroke:0.08px currentColor;">Delete</div><div style="position:absolute;left:518px;top:563px;width:152px;height:15px;background:#fdfdfd;border:1px solid #dadada;border-radius:2px;box-sizing:border-box"></div><div style="position:absolute;left:521px;top:565.55px;height:12.50px;line-height:12.50px;font-size:10.42px;color:#1a1a1a;font-weight:400;white-space:nowrap;transform:scaleX(0.8929);transform-origin:0 50%;-webkit-text-stroke:0.08px currentColor;">Ball Valve</div><svg style="position:absolute;left:659px;top:568.5px" width="8" height="5"><path d="M0.5 0.5 L4 4 L7.5 0.5" fill="none" stroke="#555" stroke-width="1"/></svg><div style="position:absolute;left:518px;top:588px;width:154.60000000000002px;height:79px;background:#fff"></div><svg style="position:absolute;left:518px;top:588px" width="155" height="79"><g fill="none" stroke="#4a4a4a" stroke-width="0.9" stroke-linejoin="miter"><path transform="translate(3.25,33.25)" d="M1.5 1 L1.5 8.5 M4.5 1 L4.5 8.5 M0 3 L6 3 M0 6 L6 6"/><path transform="translate(11.80,33.25)" d="M3.5 0 L0.5 3 L0.5 6 L3.5 9"/><path transform="translate(17.30,33.25)" d="M0 0.5 L7 0.5 M3.5 0.5 L3.5 9"/><path transform="translate(26.70,33.25)" d="M0.8 3.9 L1.6 3.4 L4.4 3.4 L5.2 4.2 L5.2 9 M5.2 5.8 L1.6 5.8 L0.6 6.8 L0.6 8.2 L1.4 9 L4.2 9 L5.2 8"/><path transform="translate(35.75,33.25)" d="M0.8 3.4 L0.8 9 M0.8 5.2 L2.4 3.4 L4.6 3.4"/><path transform="translate(42.30,33.25)" d="M5.2 4.4 L4.2 3.4 L1.6 3.4 L0.6 4.4 L0.6 7 L1.6 8 L4.2 8 L5.2 7 M5.2 3.4 L5.2 10.6 L4.2 11.6 L1.6 11.6 L0.6 10.8"/><path transform="translate(51.00,33.25)" d="M0.6 6.2 L5.4 6.2 L5.4 4.4 L4.4 3.4 L1.6 3.4 L0.6 4.4 L0.6 8 L1.6 9 L4.4 9 L5.4 8.2"/><path transform="translate(60.30,33.25)" d="M2 0.6 L2 8 L3 9 L4.6 9 M0 3.4 L4.6 3.4"/><path transform="translate(68.00,33.25)" d="M1 0.5 L5.2 0.5 L6 1.3 L6 8.2 L5.2 9 L1 9 L0.5 8.2 L0.5 1.3 Z"/><path transform="translate(76.70,33.25)" d="M0.6 0 L0.6 9 M0.6 4.4 L1.6 3.4 L4.4 3.4 L5.4 4.4 L5.4 8 L4.4 9 L1.6 9 L0.6 8"/><path transform="translate(84.50,33.25)" d="M3 0.3 L3 1.3 M3 3.4 L3 10.6 L2 11.6 L0.4 11.6"/><path transform="translate(90.75,33.25)" d="M0.6 6.2 L5.4 6.2 L5.4 4.4 L4.4 3.4 L1.6 3.4 L0.6 4.4 L0.6 8 L1.6 9 L4.4 9 L5.4 8.2"/><path transform="translate(99.30,33.25)" d="M5.4 4.4 L4.4 3.4 L1.6 3.4 L0.6 4.4 L0.6 8 L1.6 9 L4.4 9 L5.4 8"/><path transform="translate(107.00,33.25)" d="M2 0.6 L2 8 L3 9 L4.6 9 M0 3.4 L4.6 3.4"/><path transform="translate(115.75,33.25)" d="M0.8 8.2 L0.8 9.2"/><path transform="translate(120.40,33.25)" d="M0 0.5 L7 0.5 M3.5 0.5 L3.5 9"/><path transform="translate(129.80,33.25)" d="M0.8 3.9 L1.6 3.4 L4.4 3.4 L5.2 4.2 L5.2 9 M5.2 5.8 L1.6 5.8 L0.6 6.8 L0.6 8.2 L1.4 9 L4.2 9 L5.2 8"/><path transform="translate(138.40,33.25)" d="M5.2 4.4 L4.2 3.4 L1.6 3.4 L0.6 4.4 L0.6 7 L1.6 8 L4.2 8 L5.2 7 M5.2 3.4 L5.2 10.6 L4.2 11.6 L1.6 11.6 L0.6 10.8"/><path transform="translate(147.80,33.25)" d="M0.5 0 L3.5 3 L3.5 6 L0.5 9"/></g></svg><div style="position:absolute;left:678.4px;top:566.7px;width:149.60000000000002px;height:18.399999999999977px;background:#fdfdfd;border:1px solid #dcdcdc;border-radius:3px;box-sizing:border-box"></div><div style="position:absolute;left:678.4px;width:149.60000000000002px;text-align:center;top:569.42px;height:11.96px;line-height:11.96px;font-size:9.97px;color:#1a1a1a;font-weight:400;white-space:nowrap;transform:scaleX(0.8929);transform-origin:50% 50%;-webkit-text-stroke:0.08px currentColor;">Add Annotation...</div><div style="position:absolute;left:678.4px;top:590.6px;width:149.60000000000002px;height:19.399999999999977px;background:#fdfdfd;border:1.5px solid #7fb3e6;border-radius:3px;box-sizing:border-box"></div><div style="position:absolute;left:678.4px;width:149.60000000000002px;text-align:center;top:593.82px;height:11.96px;line-height:11.96px;font-size:9.97px;color:#1a1a1a;font-weight:400;white-space:nowrap;transform:scaleX(0.8929);transform-origin:50% 50%;-webkit-text-stroke:0.08px currentColor;">Edit Annotation...</div><div style="position:absolute;left:678.4px;top:616px;width:149.60000000000002px;height:19px;background:#fdfdfd;border:1px solid #dcdcdc;border-radius:3px;box-sizing:border-box"></div><div style="position:absolute;left:678.4px;width:149.60000000000002px;text-align:center;top:619.02px;height:11.96px;line-height:11.96px;font-size:9.97px;color:#1a1a1a;font-weight:400;white-space:nowrap;transform:scaleX(0.8929);transform-origin:50% 50%;-webkit-text-stroke:0.08px currentColor;">Remove Annotation...</div><div style="position:absolute;left:678.4px;top:640px;width:149.60000000000002px;height:19px;background:#fdfdfd;border:1px solid #dcdcdc;border-radius:3px;box-sizing:border-box"></div><div style="position:absolute;left:678.4px;width:149.60000000000002px;text-align:center;top:643.02px;height:11.96px;line-height:11.96px;font-size:9.97px;color:#1a1a1a;font-weight:400;white-space:nowrap;transform:scaleX(0.8929);transform-origin:50% 50%;-webkit-text-stroke:0.08px currentColor;">Edit Block...</div><div style="position:absolute;left:554.7px;top:693.8px;width:67.29999999999995px;height:17.800000000000068px;background:#fdfdfd;border:1px solid #dcdcdc;border-radius:3px;box-sizing:border-box"></div><div style="position:absolute;left:554.7px;width:67.29999999999995px;text-align:center;top:696.75px;height:12.50px;line-height:12.50px;font-size:10.42px;color:#1a1a1a;font-weight:400;white-space:nowrap;transform:scaleX(0.8929);transform-origin:50% 50%;-webkit-text-stroke:0.08px currentColor;">Apply</div><div style="position:absolute;left:628.8px;top:693.8px;width:67.70000000000005px;height:17.800000000000068px;background:#fdfdfd;border:1px solid #dcdcdc;border-radius:3px;box-sizing:border-box"></div><div style="position:absolute;left:628.8px;width:67.70000000000005px;text-align:center;top:696.75px;height:12.50px;line-height:12.50px;font-size:10.42px;color:#1a1a1a;font-weight:400;white-space:nowrap;transform:scaleX(0.8929);transform-origin:50% 50%;-webkit-text-stroke:0.08px currentColor;">OK</div><div style="position:absolute;left:703.4px;top:693.8px;width:67.30000000000007px;height:17.800000000000068px;background:#fdfdfd;border:1px solid #dcdcdc;border-radius:3px;box-sizing:border-box"></div><div style="position:absolute;left:703.4px;width:67.30000000000007px;text-align:center;top:696.75px;height:12.50px;line-height:12.50px;font-size:10.42px;color:#1a1a1a;font-weight:400;white-space:nowrap;transform:scaleX(0.8929);transform-origin:50% 50%;-webkit-text-stroke:0.08px currentColor;">Cancel</div><div style="position:absolute;left:777.5px;top:693.8px;width:67.0px;height:17.800000000000068px;background:#fdfdfd;border:1px solid #dcdcdc;border-radius:3px;box-sizing:border-box"></div><div style="position:absolute;left:777.5px;width:67.0px;text-align:center;top:696.75px;height:12.50px;line-height:12.50px;font-size:10.42px;color:#1a1a1a;font-weight:400;white-space:nowrap;transform:scaleX(0.8929);transform-origin:50% 50%;-webkit-text-stroke:0.08px currentColor;">Help</div><div style="position:absolute;left:625px;top:4px;width:381px;height:463.8px;border-radius:7px;overflow:hidden;box-shadow:0 16px 30px 0px rgba(0,0,0,0.40),0 2px 14px rgba(0,0,0,0.18),0 0 0 1px rgba(40,40,40,0.35)"><div style="position:absolute;left:0px;top:0px;width:381px;height:24px;background:#f3f3f3"></div><div style="position:absolute;left:7px;top:5px;width:12.5px;height:13.5px;background:#d5144a;border-radius:2px"></div><div style="position:absolute;left:8px;top:14px;width:10.5px;height:3.5px;background:#8a0f2e"></div><div style="position:absolute;left:9.5px;top:5.24px;height:9.72px;line-height:9.72px;font-size:8.10px;color:#fff;font-weight:700;white-space:nowrap;transform:scaleX(0.9259);transform-origin:0 50%;">A</div><div style="position:absolute;left:25px;top:6.31px;height:12.57px;line-height:12.57px;font-size:10.48px;color:#1c1c1c;font-weight:400;white-space:nowrap;transform:scaleX(0.9259);transform-origin:0 50%;">Symbol Settings</div><svg style="position:absolute;left:363.5px;top:7.2px" width="10" height="10"><path d="M0.7 0.7 L9.3 9.3 M9.3 0.7 L0.7 9.3" stroke="#2a2a2a" stroke-width="1"/></svg><div style="position:absolute;left:0px;top:24px;width:381px;height:439.8px;background:#3b4453"></div><div style="position:absolute;left:24px;top:38px;width:349px;height:17.049999999999997px;background:#2c323d"></div><div style="position:absolute;left:29.5px;top:40.84px;height:12.57px;line-height:12.57px;font-size:10.48px;color:#eef0f3;font-weight:700;white-space:nowrap;transform:scaleX(0.9259);transform-origin:0 50%;">Symbol Properties</div><svg style="position:absolute;left:359px;top:44.525px" width="9" height="5"><path d="M0 0 L8 0 L4 4.5 Z" fill="#e8eaee"/></svg><div style="position:absolute;left:38.60000000000002px;top:55px;width:334.4px;height:17.049999999999997px;background:#3a4352;border-bottom:1px solid #313845;border-left:1px solid #313845;box-sizing:border-box"></div><div style="position:absolute;left:110px;top:55px;width:1px;height:17.049999999999997px;background:#2e3441"></div><div style="position:absolute;left:43.60000000000002px;top:57.97px;height:12.31px;line-height:12.31px;font-size:10.26px;color:#a8afb9;font-weight:400;white-space:nowrap;transform:scaleX(0.9259);transform-origin:0 50%;">Symbol Name</div><div style="position:absolute;left:113px;top:57.77px;height:12.70px;line-height:12.70px;font-size:10.58px;color:#7c838e;font-weight:400;white-space:nowrap;transform:scaleX(0.9259);transform-origin:0 50%;">Ball Valve</div><div style="position:absolute;left:38.60000000000002px;top:72px;width:334.4px;height:17.049999999999997px;background:#3a4352;border-bottom:1px solid #313845;border-left:1px solid #313845;box-sizing:border-box"></div><div style="position:absolute;left:110px;top:72px;width:1px;height:17.049999999999997px;background:#2e3441"></div><div style="position:absolute;left:43.60000000000002px;top:74.97px;height:12.31px;line-height:12.31px;font-size:10.26px;color:#a8afb9;font-weight:400;white-space:nowrap;transform:scaleX(0.9259);transform-origin:0 50%;">Block</div><div style="position:absolute;left:113px;top:74.77px;height:12.70px;line-height:12.70px;font-size:10.58px;color:#e4e7eb;font-weight:400;white-space:nowrap;transform:scaleX(0.9259);transform-origin:0 50%;">Ball Valve_block</div><div style="position:absolute;left:24px;top:92.5px;width:349px;height:17.049999999999997px;background:#2c323d"></div><div style="position:absolute;left:29.5px;top:95.34px;height:12.57px;line-height:12.57px;font-size:10.48px;color:#eef0f3;font-weight:700;white-space:nowrap;transform:scaleX(0.9259);transform-origin:0 50%;">General Style Properties</div><svg style="position:absolute;left:359px;top:99.025px" width="9" height="5"><path d="M0 0 L8 0 L4 4.5 Z" fill="#e8eaee"/></svg><div style="position:absolute;left:38.60000000000002px;top:109.55px;width:334.4px;height:17.049999999999997px;background:#3a4352;border-bottom:1px solid #313845;border-left:1px solid #313845;box-sizing:border-box"></div><div style="position:absolute;left:110px;top:109.55px;width:1px;height:17.049999999999997px;background:#2e3441"></div><div style="position:absolute;left:43.60000000000002px;top:112.52px;height:12.31px;line-height:12.31px;font-size:10.26px;color:#a8afb9;font-weight:400;white-space:nowrap;transform:scaleX(0.9259);transform-origin:0 50%;">Layer</div><div style="position:absolute;left:113px;top:112.32px;height:12.70px;line-height:12.70px;font-size:10.58px;color:#e4e7eb;font-weight:400;white-space:nowrap;transform:scaleX(0.9259);transform-origin:0 50%;">Text</div><div style="position:absolute;left:38.60000000000002px;top:126.6px;width:334.4px;height:17.05000000000001px;background:#3a4352;border-bottom:1px solid #313845;border-left:1px solid #313845;box-sizing:border-box"></div><div style="position:absolute;left:110px;top:126.6px;width:1px;height:17.05000000000001px;background:#2e3441"></div><div style="position:absolute;left:43.60000000000002px;top:129.57px;height:12.31px;line-height:12.31px;font-size:10.26px;color:#a8afb9;font-weight:400;white-space:nowrap;transform:scaleX(0.9259);transform-origin:0 50%;">Color</div><div style="position:absolute;left:113.1px;top:129.7px;width:11.5px;height:11.400000000000006px;background:#000;border:1.2px solid #d6d6d6;box-sizing:border-box"></div><div style="position:absolute;left:130px;top:129.37px;height:12.70px;line-height:12.70px;font-size:10.58px;color:#e4e7eb;font-weight:400;white-space:nowrap;transform:scaleX(0.9259);transform-origin:0 50%;">ByLayer</div><div style="position:absolute;left:38.60000000000002px;top:143.65px;width:334.4px;height:17.05000000000001px;background:#3a4352;border-bottom:1px solid #313845;border-left:1px solid #313845;box-sizing:border-box"></div><div style="position:absolute;left:110px;top:143.65px;width:1px;height:17.05000000000001px;background:#2e3441"></div><div style="position:absolute;left:43.60000000000002px;top:146.62px;height:12.31px;line-height:12.31px;font-size:10.26px;color:#a8afb9;font-weight:400;white-space:nowrap;transform:scaleX(0.9259);transform-origin:0 50%;">Linetype</div><div style="position:absolute;left:113px;top:146.42px;height:12.70px;line-height:12.70px;font-size:10.58px;color:#e4e7eb;font-weight:400;white-space:nowrap;transform:scaleX(0.9259);transform-origin:0 50%;">---- Use Current ----</div><div style="position:absolute;left:38.60000000000002px;top:160.7px;width:334.4px;height:17.05000000000001px;background:#3a4352;border-bottom:1px solid #313845;border-left:1px solid #313845;box-sizing:border-box"></div><div style="position:absolute;left:110px;top:160.7px;width:1px;height:17.05000000000001px;background:#2e3441"></div><div style="position:absolute;left:43.60000000000002px;top:163.67px;height:12.31px;line-height:12.31px;font-size:10.26px;color:#a8afb9;font-weight:400;white-space:nowrap;transform:scaleX(0.9259);transform-origin:0 50%;">Linetype Scale</div><div style="position:absolute;left:113px;top:163.47px;height:12.70px;line-height:12.70px;font-size:10.58px;color:#e4e7eb;font-weight:400;white-space:nowrap;transform:scaleX(0.9259);transform-origin:0 50%;">---- Use Current ----</div><div style="position:absolute;left:38.60000000000002px;top:177.75px;width:334.4px;height:17.05000000000001px;background:#3a4352;border-bottom:1px solid #313845;border-left:1px solid #313845;box-sizing:border-box"></div><div style="position:absolute;left:110px;top:177.75px;width:1px;height:17.05000000000001px;background:#2e3441"></div><div style="position:absolute;left:43.60000000000002px;top:180.72px;height:12.31px;line-height:12.31px;font-size:10.26px;color:#a8afb9;font-weight:400;white-space:nowrap;transform:scaleX(0.9259);transform-origin:0 50%;">Plotstyle</div><div style="position:absolute;left:113px;top:180.52px;height:12.70px;line-height:12.70px;font-size:10.58px;color:#7c838e;font-weight:400;white-space:nowrap;transform:scaleX(0.9259);transform-origin:0 50%;">ByColor</div><div style="position:absolute;left:38.60000000000002px;top:194.8px;width:334.4px;height:17.05000000000001px;background:#3a4352;border-bottom:1px solid #313845;border-left:1px solid #313845;box-sizing:border-box"></div><div style="position:absolute;left:110px;top:194.8px;width:1px;height:17.05000000000001px;background:#2e3441"></div><div style="position:absolute;left:43.60000000000002px;top:197.77px;height:12.31px;line-height:12.31px;font-size:10.26px;color:#a8afb9;font-weight:400;white-space:nowrap;transform:scaleX(0.9259);transform-origin:0 50%;">Line weight</div><div style="position:absolute;left:113px;top:197.57px;height:12.70px;line-height:12.70px;font-size:10.58px;color:#e4e7eb;font-weight:400;white-space:nowrap;transform:scaleX(0.9259);transform-origin:0 50%;">---- Use Current ----</div><div style="position:absolute;left:24px;top:215.5px;width:349px;height:17.05000000000001px;background:#2c323d"></div><div style="position:absolute;left:29.5px;top:218.34px;height:12.57px;line-height:12.57px;font-size:10.48px;color:#eef0f3;font-weight:700;white-space:nowrap;transform:scaleX(0.9259);transform-origin:0 50%;">Other Properties</div><svg style="position:absolute;left:359px;top:222.025px" width="9" height="5"><path d="M0 0 L8 0 L4 4.5 Z" fill="#e8eaee"/></svg><div style="position:absolute;left:38.60000000000002px;top:232.55px;width:334.4px;height:17.05000000000001px;background:#3a4352;border-bottom:1px solid #313845;border-left:1px solid #313845;box-sizing:border-box"></div><div style="position:absolute;left:110px;top:232.55px;width:1px;height:17.05000000000001px;background:#2e3441"></div><div style="position:absolute;left:43.60000000000002px;top:235.52px;height:12.31px;line-height:12.31px;font-size:10.26px;color:#a8afb9;font-weight:400;white-space:nowrap;transform:scaleX(0.9259);transform-origin:0 50%;">Symbol Scal...</div><div style="position:absolute;left:113px;top:235.32px;height:12.70px;line-height:12.70px;font-size:10.58px;color:#e4e7eb;font-weight:400;white-space:nowrap;transform:scaleX(0.9259);transform-origin:0 50%;">10.0000</div><div style="position:absolute;left:38.60000000000002px;top:249.6px;width:334.4px;height:17.049999999999983px;background:#3a4352;border-bottom:1px solid #313845;border-left:1px solid #313845;box-sizing:border-box"></div><div style="position:absolute;left:110px;top:249.6px;width:1px;height:17.049999999999983px;background:#2e3441"></div><div style="position:absolute;left:43.60000000000002px;top:252.57px;height:12.31px;line-height:12.31px;font-size:10.26px;color:#a8afb9;font-weight:400;white-space:nowrap;transform:scaleX(0.9259);transform-origin:0 50%;">Use target p...</div><div style="position:absolute;left:113px;top:252.37px;height:12.70px;line-height:12.70px;font-size:10.58px;color:#e4e7eb;font-weight:400;white-space:nowrap;transform:scaleX(0.9259);transform-origin:0 50%;">No</div><div style="position:absolute;left:38.60000000000002px;top:266.65px;width:334.4px;height:17.05000000000001px;background:#3a4352;border-bottom:1px solid #313845;border-left:1px solid #313845;box-sizing:border-box"></div><div style="position:absolute;left:110px;top:266.65px;width:1px;height:17.05000000000001px;background:#2e3441"></div><div style="position:absolute;left:43.60000000000002px;top:269.62px;height:12.31px;line-height:12.31px;font-size:10.26px;color:#a8afb9;font-weight:400;white-space:nowrap;transform:scaleX(0.9259);transform-origin:0 50%;">Linked</div><div style="position:absolute;left:113px;top:269.42px;height:12.70px;line-height:12.70px;font-size:10.58px;color:#e4e7eb;font-weight:400;white-space:nowrap;transform:scaleX(0.9259);transform-origin:0 50%;">Yes</div><div style="position:absolute;left:38.60000000000002px;top:283.7px;width:334.4px;height:17.05000000000001px;background:#3a4352;border-bottom:1px solid #313845;border-left:1px solid #313845;box-sizing:border-box"></div><div style="position:absolute;left:110px;top:283.7px;width:1px;height:17.05000000000001px;background:#2e3441"></div><div style="position:absolute;left:43.60000000000002px;top:286.67px;height:12.31px;line-height:12.31px;font-size:10.26px;color:#a8afb9;font-weight:400;white-space:nowrap;transform:scaleX(0.9259);transform-origin:0 50%;">Auto insert?</div><div style="position:absolute;left:113px;top:286.47px;height:12.70px;line-height:12.70px;font-size:10.58px;color:#e4e7eb;font-weight:400;white-space:nowrap;transform:scaleX(0.9259);transform-origin:0 50%;">No Auto Insert</div><div style="position:absolute;left:38.60000000000002px;top:300.75px;width:334.4px;height:17.05000000000001px;background:#3a4352;border-bottom:1px solid #313845;border-left:1px solid #313845;box-sizing:border-box"></div><div style="position:absolute;left:110px;top:300.75px;width:1px;height:17.05000000000001px;background:#2e3441"></div><div style="position:absolute;left:43.60000000000002px;top:303.72px;height:12.31px;line-height:12.31px;font-size:10.26px;color:#a8afb9;font-weight:400;white-space:nowrap;transform:scaleX(0.9259);transform-origin:0 50%;">Offset X</div><div style="position:absolute;left:113px;top:303.52px;height:12.70px;line-height:12.70px;font-size:10.58px;color:#7c838e;font-weight:400;white-space:nowrap;transform:scaleX(0.9259);transform-origin:0 50%;">0.0000</div><div style="position:absolute;left:38.60000000000002px;top:317.8px;width:334.4px;height:17.05000000000001px;background:#3a4352;border-bottom:1px solid #313845;border-left:1px solid #313845;box-sizing:border-box"></div><div style="position:absolute;left:110px;top:317.8px;width:1px;height:17.05000000000001px;background:#2e3441"></div><div style="position:absolute;left:43.60000000000002px;top:320.77px;height:12.31px;line-height:12.31px;font-size:10.26px;color:#a8afb9;font-weight:400;white-space:nowrap;transform:scaleX(0.9259);transform-origin:0 50%;">Offset Y</div><div style="position:absolute;left:113px;top:320.57px;height:12.70px;line-height:12.70px;font-size:10.58px;color:#7c838e;font-weight:400;white-space:nowrap;transform:scaleX(0.9259);transform-origin:0 50%;">0.0000</div><div style="position:absolute;left:38.60000000000002px;top:334.85px;width:334.4px;height:17.05000000000001px;background:#3a4352;border-bottom:1px solid #313845;border-left:1px solid #313845;box-sizing:border-box"></div><div style="position:absolute;left:110px;top:334.85px;width:1px;height:17.05000000000001px;background:#2e3441"></div><div style="position:absolute;left:43.60000000000002px;top:337.82px;height:12.31px;line-height:12.31px;font-size:10.26px;color:#a8afb9;font-weight:400;white-space:nowrap;transform:scaleX(0.9259);transform-origin:0 50%;">Use leader</div><div style="position:absolute;left:113px;top:337.62px;height:12.70px;line-height:12.70px;font-size:10.58px;color:#e4e7eb;font-weight:400;white-space:nowrap;transform:scaleX(0.9259);transform-origin:0 50%;">Yes</div><div style="position:absolute;left:38.60000000000002px;top:351.9px;width:334.4px;height:17.05000000000001px;background:#3a4352;border-bottom:1px solid #313845;border-left:1px solid #313845;box-sizing:border-box"></div><div style="position:absolute;left:110px;top:351.9px;width:1px;height:17.05000000000001px;background:#2e3441"></div><div style="position:absolute;left:43.60000000000002px;top:354.87px;height:12.31px;line-height:12.31px;font-size:10.26px;color:#a8afb9;font-weight:400;white-space:nowrap;transform:scaleX(0.9259);transform-origin:0 50%;">Orientation</div><div style="position:absolute;left:113px;top:354.67px;height:12.70px;line-height:12.70px;font-size:10.58px;color:#e4e7eb;font-weight:400;white-space:nowrap;transform:scaleX(0.9259);transform-origin:0 50%;">Orthogonal</div><div style="position:absolute;left:185.5px;top:437.7px;width:51.5px;height:18.30000000000001px;background:#fdfdfd;border:1.5px solid #6aa6e0;box-sizing:border-box"></div><div style="position:absolute;left:185.5px;width:51.5px;text-align:center;top:440.42px;height:11.66px;line-height:11.66px;font-size:9.72px;color:#1c1c1c;font-weight:400;white-space:nowrap;transform:scaleX(0.9259);transform-origin:50% 50%;">OK</div><div style="position:absolute;left:253.39999999999998px;top:437.7px;width:52.60000000000002px;height:18.30000000000001px;background:#fdfdfd;border:1px solid #e6e6e6;box-sizing:border-box"></div><div style="position:absolute;left:253.39999999999998px;width:52.60000000000002px;text-align:center;top:440.42px;height:11.66px;line-height:11.66px;font-size:9.72px;color:#1c1c1c;font-weight:400;white-space:nowrap;transform:scaleX(0.9259);transform-origin:50% 50%;">Cancel</div><div style="position:absolute;left:321.6px;top:437.7px;width:52.10000000000002px;height:18.30000000000001px;background:#fdfdfd;border:1px solid #e6e6e6;box-sizing:border-box"></div><div style="position:absolute;left:321.6px;width:52.10000000000002px;text-align:center;top:440.42px;height:11.66px;line-height:11.66px;font-size:9.72px;color:#1c1c1c;font-weight:400;white-space:nowrap;transform:scaleX(0.9259);transform-origin:50% 50%;">Help</div></div>
</div></body></html>
